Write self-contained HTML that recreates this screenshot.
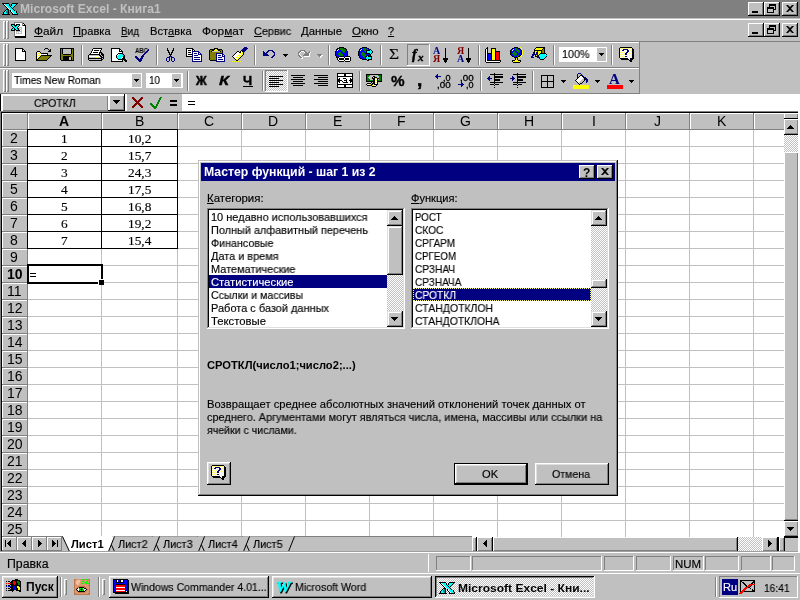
<!DOCTYPE html>
<html lang="ru"><head><meta charset="utf-8"><title>Microsoft Excel - Книга1</title>
<style>
html,body{margin:0;padding:0}
body{width:800px;height:600px;overflow:hidden;background:#c0c0c0;position:relative;font-family:"Liberation Sans",sans-serif;font-size:11px}
div,span.t,svg.ic{position:absolute}
span.t{white-space:pre;will-change:transform;-webkit-text-stroke:0.15px}
u{text-decoration:underline;text-underline-offset:1px;text-decoration-thickness:1px}
</style></head>
<body>
<div id="titlebar" style="left:0;top:0">
<div style="left:0px;top:0px;width:800px;height:18px;background:#808080;"></div>
<svg class="ic" style="left:2px;top:2px" width="16" height="13" viewBox="0 0 16 13" shape-rendering="crispEdges"><path fill="#000" d="M0 1h7v1h-7zM10 1h6v1h-6zM1 2h1v1h-1zM7 2h1v1h-1zM9 2h1v1h-1zM14 2h1v1h-1zM2 3h1v1h-1zM7 3h1v1h-1zM9 3h1v1h-1zM13 3h1v1h-1zM3 4h1v1h-1zM8 4h1v1h-1zM12 4h1v1h-1zM4 5h1v1h-1zM9 5h1v1h-1zM11 5h1v1h-1zM5 6h1v1h-1zM10 6h1v1h-1zM4 7h3v1h-3zM11 7h1v1h-1zM3 8h1v1h-1zM6 8h1v1h-1zM8 8h1v1h-1zM12 8h1v1h-1zM2 9h1v1h-1zM6 9h1v1h-1zM8 9h1v1h-1zM14 9h1v1h-1zM1 10h1v1h-1zM6 10h1v1h-1zM9 10h1v1h-1zM14 10h1v1h-1zM1 11h1v1h-1zM6 11h1v1h-1zM10 11h1v1h-1zM15 11h1v1h-1zM0 12h8v1h-8zM10 12h6v1h-6z"/><path fill="#fff" d="M2 2h1v1h-1zM3 3h1v1h-1zM4 4h1v1h-1zM5 5h1v1h-1zM6 6h1v1h-1zM7 7h1v1h-1zM9 8h1v1h-1zM9 9h1v1h-1zM10 10h1v1h-1zM11 11h1v1h-1z"/><path fill="#00ffff" d="M3 2h4v1h-4zM10 2h4v1h-4zM4 3h3v1h-3zM10 3h3v1h-3zM5 4h3v1h-3zM9 4h3v1h-3zM6 5h3v1h-3zM10 5h1v1h-1zM7 6h3v1h-3zM8 7h3v1h-3zM4 8h1v1h-1zM10 8h2v1h-2zM3 9h1v1h-1zM10 9h4v1h-4zM2 10h2v1h-2zM11 10h3v1h-3zM2 11h3v1h-3zM12 11h3v1h-3z"/><path fill="#008080" d="M5 8h1v1h-1zM4 9h2v1h-2zM4 10h2v1h-2zM5 11h1v1h-1z"/></svg>
<span class="t" style="left:20.2px;top:2px;font-family:'Liberation Sans',sans-serif;font-size:12px;line-height:14px;color:#c0c0c0;font-weight:bold;-webkit-text-stroke:0;transform:scaleX(1.007);transform-origin:0 0;">Microsoft Excel - Книга1</span>
<div style="left:748px;top:2px;width:16px;height:14px;background:#c0c0c0;box-shadow:inset -1px -1px #000,inset 1px 1px #fff,inset -2px -2px #808080;"></div>
<div style="left:752px;top:11px;width:6px;height:2px;background:#000;"></div>
<div style="left:764px;top:2px;width:16px;height:14px;background:#c0c0c0;box-shadow:inset -1px -1px #000,inset 1px 1px #fff,inset -2px -2px #808080;"></div>
<svg class="ic" style="left:767px;top:4px" width="10" height="10" viewBox="0 0 10 10" shape-rendering="crispEdges"><path d="M2.5 0.5h6v5h-6zM2 1.5h7M0.5 3.5h6v5h-6zM0 4.5h7" fill="none" stroke="#000"/><rect x="1" y="5" width="5" height="3" fill="#c0c0c0"/></svg>
<div style="left:782px;top:2px;width:16px;height:14px;background:#c0c0c0;box-shadow:inset -1px -1px #000,inset 1px 1px #fff,inset -2px -2px #808080;"></div>
<svg class="ic" style="left:786px;top:5px" width="8" height="7" viewBox="0 0 8 7" ><path d="M0 0h2l2 2 2-2h2l-3 3.5 3 3.5h-2l-2-2-2 2h-2l3-3.5z" fill="#000"/></svg>
</div>
<div id="menubar" style="left:0;top:0">
<div style="left:0px;top:19px;width:800px;height:1px;background:#fff;"></div>
<div style="left:0px;top:41px;width:800px;height:1px;background:#808080;"></div>
<div style="left:3px;top:21px;width:1px;height:18px;background:#fff;"></div>
<div style="left:5px;top:21px;width:1px;height:18px;background:#808080;"></div>
<div style="left:3px;top:21px;width:2px;height:1px;background:#fff;"></div>
<div style="left:4px;top:38px;width:2px;height:1px;background:#808080;"></div>
<div style="left:6px;top:21px;width:1px;height:18px;background:#fff;"></div>
<div style="left:8px;top:21px;width:1px;height:18px;background:#808080;"></div>
<div style="left:6px;top:21px;width:2px;height:1px;background:#fff;"></div>
<div style="left:7px;top:38px;width:2px;height:1px;background:#808080;"></div>
<svg class="ic" style="left:11px;top:22px" width="16" height="16" viewBox="0 0 16 16" shape-rendering="crispEdges"><path fill="#808080" d="M3 0h9v1h-9zM3 1h1v1h-1zM11 1h1v1h-1zM11 2h1v1h-1zM11 3h1v1h-1zM3 9h1v1h-1zM3 10h1v1h-1zM3 11h1v1h-1zM3 12h1v1h-1zM3 13h1v1h-1zM3 14h1v1h-1z"/><path fill="#fff" d="M4 1h7v1h-7zM4 2h1v1h-1zM9 2h2v1h-2zM12 2h1v1h-1zM9 3h2v1h-2zM8 4h6v1h-6zM7 5h1v1h-1zM11 5h3v1h-3zM9 6h1v1h-1zM11 6h3v1h-3zM11 7h3v1h-3zM9 8h1v1h-1zM11 8h3v1h-3zM4 9h1v1h-1zM11 9h3v1h-3zM4 10h1v1h-1zM6 10h1v1h-1zM8 10h2v1h-2zM11 10h3v1h-3zM4 11h1v1h-1zM11 11h3v1h-3zM4 12h10v1h-10zM4 13h10v1h-10z"/><path fill="#000" d="M12 1h1v1h-1zM0 2h4v1h-4zM5 2h4v1h-4zM13 2h1v1h-1zM0 3h1v1h-1zM3 3h3v1h-3zM8 3h1v1h-1zM12 3h3v1h-3zM1 4h1v1h-1zM4 4h1v1h-1zM7 4h1v1h-1zM14 4h1v1h-1zM2 5h1v1h-1zM6 5h1v1h-1zM14 5h1v1h-1zM1 6h1v1h-1zM3 6h1v1h-1zM6 6h2v1h-2zM14 6h1v1h-1zM0 7h1v1h-1zM3 7h2v1h-2zM7 7h1v1h-1zM14 7h1v1h-1zM0 8h4v1h-4zM5 8h4v1h-4zM14 8h1v1h-1zM14 9h1v1h-1zM14 10h1v1h-1zM14 11h1v1h-1zM14 12h1v1h-1zM14 13h1v1h-1zM4 14h11v1h-11zM4 15h11v1h-11z"/><path fill="#00ffff" d="M1 3h2v1h-2zM6 3h2v1h-2zM2 4h2v1h-2zM5 4h2v1h-2zM3 5h3v1h-3zM2 6h1v1h-1zM4 6h2v1h-2zM1 7h2v1h-2zM5 7h2v1h-2z"/><path fill="#c0c0c0" d="M8 5h3v1h-3zM8 6h1v1h-1zM10 6h1v1h-1zM8 7h3v1h-3zM10 8h1v1h-1zM5 9h6v1h-6zM5 10h1v1h-1zM7 10h1v1h-1zM10 10h1v1h-1zM5 11h6v1h-6z"/></svg>
<span class="t" style="left:33.7px;top:25px;font-family:'Liberation Sans',sans-serif;font-size:11px;line-height:13px;color:#000;transform:scaleX(1.075);transform-origin:0 0;"><u>Ф</u>айл</span>
<span class="t" style="left:72.7px;top:25px;font-family:'Liberation Sans',sans-serif;font-size:11px;line-height:13px;color:#000;transform:scaleX(1.012);transform-origin:0 0;"><u>П</u>равка</span>
<span class="t" style="left:120.7px;top:25px;font-family:'Liberation Sans',sans-serif;font-size:11px;line-height:13px;color:#000;transform:scaleX(0.909);transform-origin:0 0;"><u>В</u>ид</span>
<span class="t" style="left:150.2px;top:25px;font-family:'Liberation Sans',sans-serif;font-size:11px;line-height:13px;color:#000;transform:scaleX(1.017);transform-origin:0 0;">Вст<u>а</u>вка</span>
<span class="t" style="left:202.2px;top:25px;font-family:'Liberation Sans',sans-serif;font-size:11px;line-height:13px;color:#000;transform:scaleX(1.077);transform-origin:0 0;">Фор<u>м</u>ат</span>
<span class="t" style="left:253.7px;top:25px;font-family:'Liberation Sans',sans-serif;font-size:11px;line-height:13px;color:#000;transform:scaleX(0.984);transform-origin:0 0;"><u>С</u>ервис</span>
<span class="t" style="left:301.2px;top:25px;font-family:'Liberation Sans',sans-serif;font-size:11px;line-height:13px;color:#000;transform:scaleX(1.034);transform-origin:0 0;"><u>Д</u>анные</span>
<span class="t" style="left:351.7px;top:25px;font-family:'Liberation Sans',sans-serif;font-size:11px;line-height:13px;color:#000;transform:scaleX(1.040);transform-origin:0 0;"><u>О</u>кно</span>
<span class="t" style="left:387.7px;top:25px;font-family:'Liberation Sans',sans-serif;font-size:11px;line-height:13px;color:#000;"><u>?</u></span>
<div style="left:748px;top:23px;width:16px;height:14px;background:#c0c0c0;box-shadow:inset -1px -1px #000,inset 1px 1px #fff,inset -2px -2px #808080;"></div>
<div style="left:752px;top:32px;width:6px;height:2px;background:#000;"></div>
<div style="left:764px;top:23px;width:16px;height:14px;background:#c0c0c0;box-shadow:inset -1px -1px #000,inset 1px 1px #fff,inset -2px -2px #808080;"></div>
<svg class="ic" style="left:767px;top:25px" width="10" height="10" viewBox="0 0 10 10" shape-rendering="crispEdges"><path d="M2.5 0.5h6v5h-6zM2 1.5h7M0.5 3.5h6v5h-6zM0 4.5h7" fill="none" stroke="#000"/><rect x="1" y="5" width="5" height="3" fill="#c0c0c0"/></svg>
<div style="left:782px;top:23px;width:16px;height:14px;background:#c0c0c0;box-shadow:inset -1px -1px #000,inset 1px 1px #fff,inset -2px -2px #808080;"></div>
<svg class="ic" style="left:786px;top:26px" width="8" height="7" viewBox="0 0 8 7" ><path d="M0 0h2l2 2 2-2h2l-3 3.5 3 3.5h-2l-2-2-2 2h-2l3-3.5z" fill="#000"/></svg>
</div>
<div id="toolbar-standard" style="left:0;top:0">
<div style="left:0px;top:42px;width:640px;height:1px;background:#fff;"></div>
<div style="left:0px;top:67px;width:640px;height:1px;background:#808080;"></div>
<div style="left:639px;top:42px;width:1px;height:26px;background:#808080;"></div>
<div style="left:3px;top:44px;width:1px;height:22px;background:#fff;"></div>
<div style="left:5px;top:44px;width:1px;height:22px;background:#808080;"></div>
<div style="left:3px;top:44px;width:2px;height:1px;background:#fff;"></div>
<div style="left:4px;top:65px;width:2px;height:1px;background:#808080;"></div>
<div style="left:6px;top:44px;width:1px;height:22px;background:#fff;"></div>
<div style="left:8px;top:44px;width:1px;height:22px;background:#808080;"></div>
<div style="left:6px;top:44px;width:2px;height:1px;background:#fff;"></div>
<div style="left:7px;top:65px;width:2px;height:1px;background:#808080;"></div>
<svg class="ic" style="left:13px;top:47px" width="16" height="14" viewBox="0 0 16 14" shape-rendering="crispEdges"><path fill="#000" d="M2 1h8v1h-8zM2 2h1v1h-1zM9 2h2v1h-2zM2 3h1v1h-1zM9 3h1v1h-1zM11 3h1v1h-1zM2 4h1v1h-1zM9 4h4v1h-4zM2 5h1v1h-1zM12 5h1v1h-1zM2 6h1v1h-1zM12 6h1v1h-1zM2 7h1v1h-1zM12 7h1v1h-1zM2 8h1v1h-1zM12 8h1v1h-1zM2 9h1v1h-1zM12 9h1v1h-1zM2 10h1v1h-1zM12 10h1v1h-1zM2 11h1v1h-1zM12 11h1v1h-1zM2 12h1v1h-1zM12 12h1v1h-1zM2 13h11v1h-11z"/><path fill="#fff" d="M3 2h6v1h-6zM3 3h6v1h-6zM10 3h1v1h-1zM3 4h6v1h-6zM3 5h9v1h-9zM3 6h9v1h-9zM3 7h9v1h-9zM3 8h9v1h-9zM3 9h9v1h-9zM3 10h9v1h-9zM3 11h9v1h-9zM3 12h9v1h-9z"/></svg>
<svg class="ic" style="left:36px;top:47px" width="16" height="14" viewBox="0 0 16 14" shape-rendering="crispEdges"><path fill="#000" d="M9 1h3v1h-3zM8 2h1v1h-1zM12 2h1v1h-1zM14 2h1v1h-1zM13 3h2v1h-2zM1 4h3v1h-3zM12 4h3v1h-3zM0 5h1v1h-1zM4 5h1v1h-1zM0 6h1v1h-1zM5 6h7v1h-7zM0 7h1v1h-1zM11 7h1v1h-1zM0 8h1v1h-1zM5 8h11v1h-11zM0 9h1v1h-1zM4 9h1v1h-1zM14 9h1v1h-1zM0 10h1v1h-1zM3 10h1v1h-1zM13 10h1v1h-1zM0 11h1v1h-1zM2 11h1v1h-1zM12 11h1v1h-1zM0 12h2v1h-2zM11 12h1v1h-1zM0 13h11v1h-11z"/><path fill="#ffff00" d="M1 5h1v1h-1zM3 5h1v1h-1zM2 6h1v1h-1zM4 6h1v1h-1zM1 7h1v1h-1zM3 7h1v1h-1zM5 7h1v1h-1zM7 7h1v1h-1zM9 7h1v1h-1zM2 8h1v1h-1zM4 8h1v1h-1zM1 9h1v1h-1zM3 9h1v1h-1zM2 10h1v1h-1zM1 11h1v1h-1z"/><path fill="#fff" d="M2 5h1v1h-1zM1 6h1v1h-1zM3 6h1v1h-1zM2 7h1v1h-1zM4 7h1v1h-1zM6 7h1v1h-1zM8 7h1v1h-1zM10 7h1v1h-1zM1 8h1v1h-1zM3 8h1v1h-1zM2 9h1v1h-1zM1 10h1v1h-1z"/><path fill="#808000" d="M5 9h9v1h-9zM4 10h9v1h-9zM3 11h9v1h-9zM2 12h9v1h-9z"/></svg>
<svg class="ic" style="left:59px;top:47px" width="16" height="14" viewBox="0 0 16 14" shape-rendering="crispEdges"><path fill="#000" d="M1 1h14v1h-14zM1 2h1v1h-1zM3 2h1v1h-1zM12 2h1v1h-1zM14 2h1v1h-1zM1 3h1v1h-1zM3 3h1v1h-1zM12 3h1v1h-1zM14 3h1v1h-1zM1 4h1v1h-1zM3 4h1v1h-1zM12 4h1v1h-1zM14 4h1v1h-1zM1 5h1v1h-1zM3 5h1v1h-1zM12 5h1v1h-1zM14 5h1v1h-1zM1 6h1v1h-1zM3 6h1v1h-1zM12 6h1v1h-1zM14 6h1v1h-1zM1 7h1v1h-1zM4 7h8v1h-8zM14 7h1v1h-1zM1 8h1v1h-1zM14 8h1v1h-1zM1 9h1v1h-1zM4 9h8v1h-8zM14 9h1v1h-1zM1 10h1v1h-1zM4 10h6v1h-6zM12 10h1v1h-1zM14 10h1v1h-1zM1 11h1v1h-1zM4 11h6v1h-6zM12 11h1v1h-1zM14 11h1v1h-1zM1 12h1v1h-1zM4 12h6v1h-6zM12 12h1v1h-1zM14 12h1v1h-1zM2 13h13v1h-13z"/><path fill="#808000" d="M2 2h1v1h-1zM13 2h1v1h-1zM2 3h1v1h-1zM13 3h1v1h-1zM2 4h1v1h-1zM13 4h1v1h-1zM2 5h1v1h-1zM13 5h1v1h-1zM2 6h1v1h-1zM13 6h1v1h-1zM2 7h2v1h-2zM12 7h2v1h-2zM2 8h12v1h-12zM2 9h2v1h-2zM12 9h2v1h-2zM2 10h2v1h-2zM13 10h1v1h-1zM2 11h2v1h-2zM13 11h1v1h-1zM2 12h2v1h-2zM13 12h1v1h-1z"/><path fill="#c0c0c0" d="M4 2h8v1h-8zM4 3h8v1h-8zM4 4h8v1h-8zM4 5h8v1h-8zM4 6h8v1h-8zM10 10h2v1h-2zM10 11h2v1h-2zM10 12h2v1h-2z"/></svg>
<div style="left:81px;top:45px;width:1px;height:20px;background:#808080;"></div>
<div style="left:82px;top:45px;width:1px;height:20px;background:#fff;"></div>
<svg class="ic" style="left:88px;top:47px" width="16" height="14" viewBox="0 0 16 14" shape-rendering="crispEdges"><path fill="#000" d="M5 1h9v1h-9zM4 2h1v1h-1zM13 2h1v1h-1zM4 3h1v1h-1zM6 3h5v1h-5zM12 3h1v1h-1zM3 4h1v1h-1zM12 4h1v1h-1zM3 5h1v1h-1zM5 5h5v1h-5zM11 5h3v1h-3zM2 6h1v1h-1zM11 6h1v1h-1zM13 6h2v1h-2zM1 7h11v1h-11zM13 7h3v1h-3zM0 8h1v1h-1zM11 8h2v1h-2zM14 8h2v1h-2zM0 9h1v1h-1zM12 9h2v1h-2zM15 9h1v1h-1zM0 10h1v1h-1zM13 10h3v1h-3zM0 11h14v1h-14zM15 11h1v1h-1zM0 12h1v1h-1zM13 12h2v1h-2zM1 13h13v1h-13z"/><path fill="#fff" d="M5 2h8v1h-8zM5 3h1v1h-1zM11 3h1v1h-1zM4 4h8v1h-8zM4 5h1v1h-1zM10 5h1v1h-1zM3 6h8v1h-8zM1 9h11v1h-11z"/><path fill="#c0c0c0" d="M12 6h1v1h-1zM12 7h1v1h-1zM1 8h10v1h-10zM13 8h1v1h-1zM14 9h1v1h-1zM1 10h7v1h-7zM10 10h3v1h-3zM14 11h1v1h-1zM1 12h12v1h-12z"/><path fill="#ffff00" d="M8 10h2v1h-2z"/></svg>
<svg class="ic" style="left:111px;top:47px" width="16" height="15" viewBox="0 0 16 15" shape-rendering="crispEdges"><path fill="#000" d="M0 1h9v1h-9zM0 2h1v1h-1zM8 2h2v1h-2zM0 3h1v1h-1zM8 3h1v1h-1zM10 3h1v1h-1zM0 4h1v1h-1zM8 4h4v1h-4zM0 5h1v1h-1zM11 5h1v1h-1zM0 6h1v1h-1zM7 6h5v1h-5zM0 7h1v1h-1zM6 7h1v1h-1zM12 7h1v1h-1zM0 8h1v1h-1zM5 8h1v1h-1zM13 8h1v1h-1zM0 9h1v1h-1zM5 9h1v1h-1zM12 9h2v1h-2zM0 10h1v1h-1zM5 10h1v1h-1zM12 10h2v1h-2zM0 11h1v1h-1zM6 11h1v1h-1zM11 11h3v1h-3zM0 12h1v1h-1zM7 12h8v1h-8zM0 13h1v1h-1zM11 13h1v1h-1zM13 13h3v1h-3zM0 14h12v1h-12zM14 14h2v1h-2z"/><path fill="#fff" d="M1 2h7v1h-7zM1 3h7v1h-7zM9 3h1v1h-1zM1 4h7v1h-7zM1 5h10v1h-10zM1 6h6v1h-6zM1 7h5v1h-5zM7 7h1v1h-1zM1 8h4v1h-4zM6 8h1v1h-1zM1 9h4v1h-4zM1 10h4v1h-4zM11 10h1v1h-1zM1 11h5v1h-5zM10 11h1v1h-1zM1 12h6v1h-6zM1 13h10v1h-10z"/><path fill="#00ffff" d="M8 7h3v1h-3zM7 8h5v1h-5zM6 9h6v1h-6zM6 10h5v1h-5zM7 11h3v1h-3z"/><path fill="#808080" d="M11 7h1v1h-1zM12 8h1v1h-1z"/></svg>
<span class="t" style="left:135.2px;top:46px;font-family:'Liberation Sans',sans-serif;font-size:7px;line-height:9px;color:#000;font-weight:bold;-webkit-text-stroke:0;transform:scaleX(0.863);transform-origin:0 0;">ABC</span>
<svg class="ic" style="left:134px;top:49px" width="16" height="13" viewBox="0 0 16 13" shape-rendering="crispEdges"><path fill="#000080" d="M14 0h1v1h-1zM13 1h2v1h-2zM12 2h2v1h-2zM11 3h2v1h-2zM10 4h2v1h-2zM9 5h2v1h-2zM8 6h2v1h-2zM1 7h2v1h-2zM7 7h3v1h-3zM1 8h3v1h-3zM7 8h2v1h-2zM2 9h3v1h-3zM6 9h3v1h-3zM3 10h5v1h-5zM4 11h4v1h-4zM5 12h2v1h-2z"/></svg>
<div style="left:156px;top:45px;width:1px;height:20px;background:#808080;"></div>
<div style="left:157px;top:45px;width:1px;height:20px;background:#fff;"></div>
<svg class="ic" style="left:163px;top:47px" width="16" height="15" viewBox="0 0 16 15" shape-rendering="crispEdges"><path fill="#000" d="M4 1h1v1h-1zM10 1h1v1h-1zM4 2h1v1h-1zM10 2h1v1h-1zM4 3h2v1h-2zM9 3h2v1h-2zM5 4h1v1h-1zM9 4h1v1h-1zM5 5h2v1h-2zM8 5h2v1h-2zM6 6h1v1h-1zM8 6h1v1h-1zM6 7h3v1h-3zM7 8h1v1h-1z"/><path fill="#000080" d="M6 9h3v1h-3zM4 10h3v1h-3zM8 10h3v1h-3zM3 11h1v1h-1zM6 11h1v1h-1zM8 11h1v1h-1zM11 11h1v1h-1zM3 12h1v1h-1zM6 12h1v1h-1zM8 12h1v1h-1zM11 12h1v1h-1zM3 13h1v1h-1zM6 13h1v1h-1zM8 13h1v1h-1zM11 13h1v1h-1zM4 14h2v1h-2zM9 14h2v1h-2z"/></svg>
<svg class="ic" style="left:186px;top:47px" width="16" height="15" viewBox="0 0 16 15" shape-rendering="crispEdges"><path fill="#000" d="M0 1h7v1h-7zM0 2h1v1h-1zM6 2h2v1h-2zM0 3h1v1h-1zM2 3h3v1h-3zM6 3h1v1h-1zM8 3h1v1h-1zM0 4h1v1h-1zM0 5h1v1h-1zM2 5h3v1h-3zM0 6h1v1h-1zM0 7h1v1h-1zM2 7h4v1h-4zM0 8h1v1h-1zM0 9h6v1h-6z"/><path fill="#fff" d="M1 2h5v1h-5zM1 3h1v1h-1zM5 3h1v1h-1zM7 3h1v1h-1zM1 4h5v1h-5zM1 5h1v1h-1zM5 5h1v1h-1zM7 5h5v1h-5zM1 6h5v1h-5zM7 6h1v1h-1zM11 6h1v1h-1zM13 6h1v1h-1zM1 7h1v1h-1zM7 7h5v1h-5zM1 8h5v1h-5zM7 8h1v1h-1zM12 8h3v1h-3zM7 9h8v1h-8zM7 10h1v1h-1zM14 10h1v1h-1zM7 11h8v1h-8zM7 12h1v1h-1zM14 12h1v1h-1zM7 13h8v1h-8z"/><path fill="#000080" d="M6 4h7v1h-7zM6 5h1v1h-1zM12 5h2v1h-2zM6 6h1v1h-1zM8 6h3v1h-3zM12 6h1v1h-1zM14 6h1v1h-1zM6 7h1v1h-1zM12 7h4v1h-4zM6 8h1v1h-1zM8 8h4v1h-4zM15 8h1v1h-1zM6 9h1v1h-1zM15 9h1v1h-1zM6 10h1v1h-1zM8 10h6v1h-6zM15 10h1v1h-1zM6 11h1v1h-1zM15 11h1v1h-1zM6 12h1v1h-1zM8 12h6v1h-6zM15 12h1v1h-1zM6 13h1v1h-1zM15 13h1v1h-1zM6 14h10v1h-10z"/></svg>
<svg class="ic" style="left:209px;top:47px" width="16" height="15" viewBox="0 0 16 15" shape-rendering="crispEdges"><path fill="#000" d="M5 1h4v1h-4zM1 2h5v1h-5zM8 2h5v1h-5zM0 3h1v1h-1zM3 3h2v1h-2zM9 3h2v1h-2zM13 3h1v1h-1zM0 4h1v1h-1zM2 4h1v1h-1zM11 4h1v1h-1zM13 4h1v1h-1zM0 5h1v1h-1zM13 5h1v1h-1zM0 6h1v1h-1zM0 7h1v1h-1zM0 8h1v1h-1zM0 9h1v1h-1zM0 10h1v1h-1zM0 11h1v1h-1zM0 12h1v1h-1zM1 13h6v1h-6z"/><path fill="#ffff00" d="M6 2h2v1h-2zM5 3h4v1h-4z"/><path fill="#808000" d="M1 3h2v1h-2zM11 3h2v1h-2zM1 4h1v1h-1zM12 4h1v1h-1zM1 5h12v1h-12zM1 6h6v1h-6zM1 7h6v1h-6zM1 8h6v1h-6zM1 9h6v1h-6zM1 10h6v1h-6zM1 11h6v1h-6zM1 12h6v1h-6z"/><path fill="#c0c0c0" d="M3 4h8v1h-8z"/><path fill="#000080" d="M7 6h7v1h-7zM7 7h1v1h-1zM13 7h2v1h-2zM7 8h1v1h-1zM9 8h3v1h-3zM13 8h1v1h-1zM15 8h1v1h-1zM7 9h1v1h-1zM13 9h3v1h-3zM7 10h1v1h-1zM9 10h4v1h-4zM15 10h1v1h-1zM7 11h1v1h-1zM15 11h1v1h-1zM7 12h1v1h-1zM9 12h5v1h-5zM15 12h1v1h-1zM7 13h1v1h-1zM15 13h1v1h-1zM7 14h9v1h-9z"/><path fill="#fff" d="M8 7h5v1h-5zM8 8h1v1h-1zM12 8h1v1h-1zM14 8h1v1h-1zM8 9h5v1h-5zM8 10h1v1h-1zM13 10h2v1h-2zM8 11h7v1h-7zM8 12h1v1h-1zM14 12h1v1h-1zM8 13h7v1h-7z"/></svg>
<svg class="ic" style="left:232px;top:47px" width="16" height="15" viewBox="0 0 16 15" shape-rendering="crispEdges"><path fill="#000080" d="M12 0h3v1h-3zM11 1h5v1h-5zM10 2h5v1h-5zM10 3h4v1h-4zM11 4h2v1h-2z"/><path fill="#000" d="M9 3h1v1h-1zM5 4h2v1h-2zM8 4h1v1h-1zM10 4h1v1h-1zM4 5h1v1h-1zM7 5h2v1h-2zM11 5h1v1h-1zM3 6h1v1h-1zM11 6h1v1h-1zM2 7h1v1h-1zM11 7h1v1h-1zM1 8h1v1h-1zM10 8h1v1h-1zM0 9h1v1h-1zM9 9h1v1h-1zM1 10h1v1h-1zM8 10h1v1h-1zM2 11h1v1h-1zM7 11h1v1h-1zM3 12h1v1h-1zM6 12h1v1h-1zM4 13h2v1h-2z"/><path fill="#fff" d="M9 4h1v1h-1zM5 5h2v1h-2zM9 5h1v1h-1zM4 6h4v1h-4zM9 6h1v1h-1zM3 7h4v1h-4zM8 7h1v1h-1zM2 8h4v1h-4zM7 8h1v1h-1zM1 9h4v1h-4zM6 9h1v1h-1zM2 10h2v1h-2zM5 10h1v1h-1zM3 11h2v1h-2z"/><path fill="#ffff00" d="M10 5h1v1h-1zM8 6h1v1h-1zM10 6h1v1h-1zM7 7h1v1h-1zM9 7h2v1h-2zM6 8h1v1h-1zM8 8h2v1h-2zM5 9h1v1h-1zM7 9h2v1h-2zM4 10h1v1h-1zM6 10h2v1h-2zM5 11h2v1h-2zM4 12h2v1h-2zM0 14h1v1h-1zM2 14h1v1h-1zM4 14h1v1h-1zM6 14h1v1h-1zM8 14h1v1h-1z"/></svg>
<div style="left:254px;top:45px;width:1px;height:20px;background:#808080;"></div>
<div style="left:255px;top:45px;width:1px;height:20px;background:#fff;"></div>
<svg class="ic" style="left:262px;top:47px" width="16" height="11" viewBox="0 0 16 11" shape-rendering="crispEdges"><path fill="#000080" d="M6 3h5v1h-5zM1 4h1v1h-1zM5 4h2v1h-2zM10 4h2v1h-2zM1 5h2v1h-2zM4 5h2v1h-2zM11 5h2v1h-2zM1 6h4v1h-4zM12 6h1v1h-1zM1 7h5v1h-5zM12 7h1v1h-1zM1 8h6v1h-6zM11 8h2v1h-2zM10 9h2v1h-2zM9 10h2v1h-2z"/></svg>
<div style="left:283px;top:54px;width:5px;height:1px;background:#000;"></div>
<div style="left:284px;top:55px;width:3px;height:1px;background:#000;"></div>
<div style="left:285px;top:56px;width:1px;height:1px;background:#000;"></div>
<svg class="ic" style="left:295px;top:47px" width="16" height="12" viewBox="0 0 16 12" shape-rendering="crispEdges"><path fill="#808080" d="M5 3h5v1h-5zM4 4h2v1h-2zM9 4h2v1h-2zM14 4h1v1h-1zM3 5h2v1h-2zM10 5h2v1h-2zM13 5h2v1h-2zM3 6h1v1h-1zM10 6h4v1h-4zM3 7h1v1h-1zM9 7h5v1h-5zM3 8h2v1h-2zM8 8h6v1h-6zM4 9h2v1h-2zM5 10h2v1h-2z"/><path fill="#fff" d="M6 4h3v1h-3zM5 5h1v1h-1zM9 5h1v1h-1zM15 5h1v1h-1zM4 6h1v1h-1zM14 6h1v1h-1zM4 7h1v1h-1zM14 7h1v1h-1zM5 8h1v1h-1zM14 8h1v1h-1zM6 9h1v1h-1zM9 9h6v1h-6zM7 10h1v1h-1zM6 11h2v1h-2z"/></svg>
<div style="left:318px;top:55px;width:5px;height:1px;background:#fff;"></div>
<div style="left:319px;top:56px;width:3px;height:1px;background:#fff;"></div>
<div style="left:320px;top:57px;width:1px;height:1px;background:#fff;"></div>
<div style="left:317px;top:54px;width:5px;height:1px;background:#808080;"></div>
<div style="left:318px;top:55px;width:3px;height:1px;background:#808080;"></div>
<div style="left:319px;top:56px;width:1px;height:1px;background:#808080;"></div>
<div style="left:328px;top:45px;width:1px;height:20px;background:#808080;"></div>
<div style="left:329px;top:45px;width:1px;height:20px;background:#fff;"></div>
<svg class="ic" style="left:335px;top:47px" width="16" height="13" viewBox="0 0 16 13" shape-rendering="crispEdges"><path fill="#000" d="M4 0h5v1h-5zM2 1h2v1h-2zM9 1h2v1h-2zM1 2h1v1h-1zM11 2h1v1h-1zM1 3h1v1h-1zM11 3h1v1h-1zM0 4h1v1h-1zM12 4h1v1h-1zM0 5h1v1h-1zM12 5h1v1h-1zM0 6h1v1h-1zM12 6h1v1h-1zM0 7h1v1h-1zM12 7h1v1h-1zM0 8h1v1h-1zM12 8h1v1h-1zM1 9h1v1h-1zM11 9h1v1h-1zM1 10h1v1h-1zM11 10h1v1h-1zM2 11h2v1h-2zM9 11h2v1h-2zM4 12h5v1h-5z"/><path fill="#0000ff" d="M4 1h1v1h-1zM8 1h1v1h-1zM2 2h1v1h-1zM4 2h1v1h-1zM10 2h1v1h-1zM3 3h3v1h-3zM1 4h6v1h-6zM10 4h2v1h-2zM1 5h3v1h-3zM6 5h2v1h-2zM10 5h2v1h-2zM1 6h2v1h-2zM7 6h5v1h-5zM1 7h2v1h-2zM8 7h4v1h-4zM1 8h3v1h-3zM8 8h4v1h-4zM2 9h3v1h-3zM7 9h4v1h-4zM2 10h4v1h-4zM7 10h4v1h-4zM4 11h5v1h-5z"/><path fill="#008000" d="M5 1h3v1h-3zM5 2h5v1h-5zM6 3h5v1h-5zM7 4h3v1h-3zM4 5h2v1h-2zM8 5h2v1h-2zM3 6h4v1h-4zM3 7h5v1h-5zM4 8h4v1h-4zM5 9h2v1h-2zM6 10h1v1h-1z"/><path fill="#fff" d="M3 2h1v1h-1zM2 3h1v1h-1z"/></svg>
<svg class="ic" style="left:337px;top:56px" width="14" height="6" viewBox="0 0 14 6" shape-rendering="crispEdges"><path fill="#000" d="M2 0h5v1h-5zM8 0h5v1h-5zM1 1h1v1h-1zM7 1h1v1h-1zM13 1h1v1h-1zM0 2h1v1h-1zM2 2h5v1h-5zM8 2h4v1h-4zM13 2h1v1h-1zM0 3h1v1h-1zM2 3h5v1h-5zM8 3h4v1h-4zM13 3h1v1h-1zM1 4h1v1h-1zM7 4h1v1h-1zM13 4h1v1h-1zM2 5h5v1h-5zM8 5h5v1h-5z"/><path fill="#fff" d="M2 1h5v1h-5zM8 1h5v1h-5zM1 2h1v1h-1zM7 2h1v1h-1zM12 2h1v1h-1zM1 3h1v1h-1zM7 3h1v1h-1zM12 3h1v1h-1zM2 4h5v1h-5zM8 4h5v1h-5z"/></svg>
<svg class="ic" style="left:358px;top:47px" width="16" height="13" viewBox="0 0 16 13" shape-rendering="crispEdges"><path fill="#000" d="M4 0h5v1h-5zM2 1h2v1h-2zM9 1h2v1h-2zM1 2h1v1h-1zM11 2h1v1h-1zM1 3h1v1h-1zM11 3h1v1h-1zM0 4h1v1h-1zM12 4h1v1h-1zM0 5h1v1h-1zM12 5h1v1h-1zM0 6h1v1h-1zM12 6h1v1h-1zM0 7h1v1h-1zM12 7h1v1h-1zM0 8h1v1h-1zM12 8h1v1h-1zM1 9h1v1h-1zM11 9h1v1h-1zM1 10h1v1h-1zM11 10h1v1h-1zM2 11h2v1h-2zM9 11h2v1h-2zM4 12h5v1h-5z"/><path fill="#0000ff" d="M4 1h1v1h-1zM8 1h1v1h-1zM2 2h1v1h-1zM4 2h1v1h-1zM10 2h1v1h-1zM3 3h3v1h-3zM1 4h6v1h-6zM10 4h2v1h-2zM1 5h3v1h-3zM6 5h2v1h-2zM10 5h2v1h-2zM1 6h2v1h-2zM7 6h5v1h-5zM1 7h2v1h-2zM8 7h4v1h-4zM1 8h3v1h-3zM8 8h4v1h-4zM2 9h3v1h-3zM7 9h4v1h-4zM2 10h4v1h-4zM7 10h4v1h-4zM4 11h5v1h-5z"/><path fill="#008000" d="M5 1h3v1h-3zM5 2h5v1h-5zM6 3h5v1h-5zM7 4h3v1h-3zM4 5h2v1h-2zM8 5h2v1h-2zM3 6h4v1h-4zM3 7h5v1h-5zM4 8h4v1h-4zM5 9h2v1h-2zM6 10h1v1h-1z"/><path fill="#fff" d="M3 2h1v1h-1zM2 3h1v1h-1z"/></svg>
<svg class="ic" style="left:364px;top:49px" width="10" height="12" viewBox="0 0 10 12" shape-rendering="crispEdges"><path fill="#000" d="M5 0h2v1h-2zM2 1h4v1h-4zM7 1h1v1h-1zM2 2h1v1h-1zM8 2h1v1h-1zM2 3h1v1h-1zM8 3h1v1h-1zM2 4h4v1h-4zM7 4h1v1h-1zM5 5h2v1h-2zM3 6h2v1h-2zM2 7h1v1h-1zM4 7h4v1h-4zM1 8h1v1h-1zM7 8h1v1h-1zM1 9h1v1h-1zM7 9h1v1h-1zM2 10h1v1h-1zM4 10h4v1h-4zM3 11h2v1h-2z"/><path fill="#00ffff" d="M6 1h1v1h-1zM3 2h5v1h-5zM3 3h5v1h-5zM6 4h1v1h-1zM3 7h1v1h-1zM2 8h5v1h-5zM2 9h5v1h-5zM3 10h1v1h-1z"/></svg>
<div style="left:380px;top:45px;width:1px;height:20px;background:#808080;"></div>
<div style="left:381px;top:45px;width:1px;height:20px;background:#fff;"></div>
<span class="t" style="left:389.4px;top:47px;font-family:'Liberation Serif',serif;font-size:14px;line-height:16px;color:#000;transform:scaleX(1.238);transform-origin:0 0;">Σ</span>
<div style="left:407px;top:44px;width:23px;height:22px;box-shadow:inset -1px -1px #fff,inset 1px 1px #808080;"></div>
<span class="t" style="left:412.2px;top:47px;font-family:'Liberation Serif',serif;font-size:14px;line-height:16px;color:#000;font-weight:bold;-webkit-text-stroke:0;font-style:italic;-webkit-text-stroke:0.5px #000;">f</span>
<span class="t" style="left:418.2px;top:51px;font-family:'Liberation Serif',serif;font-size:11px;line-height:13px;color:#000;font-weight:bold;-webkit-text-stroke:0;font-style:italic;-webkit-text-stroke:0.4px #000;">x</span>
<span class="t" style="left:433.4px;top:45px;font-family:'Liberation Serif',serif;font-size:10px;line-height:12px;color:#000080;font-weight:bold;-webkit-text-stroke:0;">А</span>
<span class="t" style="left:433.4px;top:53px;font-family:'Liberation Serif',serif;font-size:10px;line-height:12px;color:#800000;font-weight:bold;-webkit-text-stroke:0;">Я</span>
<div style="left:445px;top:48px;width:1px;height:14px;background:#000;"></div>
<div style="left:443px;top:58px;width:5px;height:1px;background:#000;"></div>
<div style="left:443px;top:59px;width:5px;height:1px;background:#000;"></div>
<div style="left:444px;top:60px;width:3px;height:1px;background:#000;"></div>
<div style="left:444px;top:61px;width:3px;height:1px;background:#000;"></div>
<div style="left:445px;top:62px;width:1px;height:1px;background:#000;"></div>
<span class="t" style="left:457.4px;top:45px;font-family:'Liberation Serif',serif;font-size:10px;line-height:12px;color:#800000;font-weight:bold;-webkit-text-stroke:0;">Я</span>
<span class="t" style="left:457.4px;top:53px;font-family:'Liberation Serif',serif;font-size:10px;line-height:12px;color:#000080;font-weight:bold;-webkit-text-stroke:0;">А</span>
<div style="left:468px;top:48px;width:1px;height:14px;background:#000;"></div>
<div style="left:466px;top:58px;width:5px;height:1px;background:#000;"></div>
<div style="left:466px;top:59px;width:5px;height:1px;background:#000;"></div>
<div style="left:467px;top:60px;width:3px;height:1px;background:#000;"></div>
<div style="left:467px;top:61px;width:3px;height:1px;background:#000;"></div>
<div style="left:468px;top:62px;width:1px;height:1px;background:#000;"></div>
<div style="left:478px;top:45px;width:1px;height:20px;background:#808080;"></div>
<div style="left:479px;top:45px;width:1px;height:20px;background:#fff;"></div>
<svg class="ic" style="left:485px;top:47px" width="16" height="16" viewBox="0 0 16 16" shape-rendering="crispEdges"><path fill="#000" d="M2 0h1v1h-1zM1 1h2v1h-2zM6 1h5v1h-5zM0 2h1v1h-1zM2 2h1v1h-1zM6 2h1v1h-1zM10 2h1v1h-1zM0 3h1v1h-1zM2 3h1v1h-1zM6 3h1v1h-1zM10 3h1v1h-1zM0 4h1v1h-1zM2 4h1v1h-1zM6 4h1v1h-1zM10 4h5v1h-5zM0 5h1v1h-1zM2 5h1v1h-1zM6 5h1v1h-1zM10 5h1v1h-1zM14 5h1v1h-1zM0 6h1v1h-1zM2 6h5v1h-5zM10 6h1v1h-1zM14 6h1v1h-1zM0 7h1v1h-1zM2 7h1v1h-1zM6 7h1v1h-1zM10 7h1v1h-1zM14 7h1v1h-1zM0 8h1v1h-1zM2 8h1v1h-1zM6 8h1v1h-1zM10 8h1v1h-1zM14 8h1v1h-1zM0 9h1v1h-1zM2 9h1v1h-1zM6 9h1v1h-1zM10 9h1v1h-1zM14 9h1v1h-1zM0 10h1v1h-1zM2 10h1v1h-1zM6 10h1v1h-1zM10 10h1v1h-1zM14 10h1v1h-1zM0 11h1v1h-1zM2 11h1v1h-1zM6 11h1v1h-1zM10 11h1v1h-1zM14 11h1v1h-1zM0 12h1v1h-1zM2 12h1v1h-1zM6 12h1v1h-1zM10 12h1v1h-1zM14 12h1v1h-1zM0 13h1v1h-1zM2 13h14v1h-14zM0 14h1v1h-1zM15 14h1v1h-1zM1 15h14v1h-14z"/><path fill="#fff" d="M1 2h1v1h-1zM1 3h1v1h-1zM1 4h1v1h-1zM1 5h1v1h-1zM1 6h1v1h-1zM1 7h1v1h-1zM1 8h1v1h-1zM1 9h1v1h-1zM1 10h1v1h-1zM1 11h1v1h-1zM1 12h1v1h-1zM1 13h1v1h-1zM1 14h14v1h-14z"/><path fill="#ffff00" d="M7 2h3v1h-3zM7 3h3v1h-3zM7 4h3v1h-3zM7 5h3v1h-3zM7 6h3v1h-3zM7 7h3v1h-3zM7 8h3v1h-3zM7 9h3v1h-3zM7 10h3v1h-3zM7 11h3v1h-3zM7 12h3v1h-3z"/><path fill="#ff0000" d="M11 5h3v1h-3zM11 6h3v1h-3zM11 7h3v1h-3zM11 8h3v1h-3zM11 9h3v1h-3zM11 10h3v1h-3zM11 11h3v1h-3zM11 12h3v1h-3z"/><path fill="#0000ff" d="M3 7h3v1h-3zM3 8h3v1h-3zM3 9h3v1h-3zM3 10h3v1h-3zM3 11h3v1h-3zM3 12h3v1h-3z"/></svg>
<svg class="ic" style="left:508px;top:47px" width="16" height="16" viewBox="0 0 16 16" shape-rendering="crispEdges"><path fill="#000" d="M6 0h4v1h-4zM4 1h2v1h-2zM10 1h2v1h-2zM3 2h1v1h-1zM12 2h1v1h-1zM2 3h1v1h-1zM13 3h1v1h-1zM2 4h1v1h-1zM13 4h1v1h-1zM2 5h1v1h-1zM13 5h1v1h-1zM2 6h1v1h-1zM13 6h1v1h-1zM2 7h1v1h-1zM13 7h1v1h-1zM3 8h1v1h-1zM12 8h1v1h-1zM4 9h2v1h-2zM10 9h2v1h-2zM6 10h4v1h-4zM7 11h1v1h-1zM9 11h1v1h-1zM7 12h1v1h-1zM9 12h1v1h-1zM4 13h3v1h-3zM10 13h3v1h-3zM4 14h1v1h-1zM12 14h1v1h-1zM5 15h7v1h-7z"/><path fill="#ffff00" d="M12 0h1v1h-1zM13 1h1v1h-1zM13 2h1v1h-1zM14 3h1v1h-1zM14 4h1v1h-1zM14 5h1v1h-1zM14 6h1v1h-1zM14 7h1v1h-1zM13 8h1v1h-1zM12 9h2v1h-2zM10 10h2v1h-2zM8 11h1v1h-1zM8 12h1v1h-1zM7 13h3v1h-3zM5 14h7v1h-7z"/><path fill="#0000ff" d="M6 1h1v1h-1zM9 1h1v1h-1zM4 2h1v1h-1zM6 2h1v1h-1zM10 2h2v1h-2zM3 3h1v1h-1zM5 3h3v1h-3zM12 3h1v1h-1zM3 4h3v1h-3zM7 4h2v1h-2zM12 4h1v1h-1zM3 5h2v1h-2zM8 5h2v1h-2zM11 5h2v1h-2zM3 6h1v1h-1zM9 6h4v1h-4zM3 7h2v1h-2zM9 7h4v1h-4zM4 8h2v1h-2zM8 8h2v1h-2zM11 8h1v1h-1zM6 9h3v1h-3z"/><path fill="#008000" d="M7 1h2v1h-2zM7 2h3v1h-3zM8 3h4v1h-4zM6 4h1v1h-1zM9 4h3v1h-3zM5 5h3v1h-3zM10 5h1v1h-1zM4 6h5v1h-5zM5 7h4v1h-4zM6 8h2v1h-2zM10 8h1v1h-1zM9 9h1v1h-1z"/><path fill="#fff" d="M5 2h1v1h-1zM4 3h1v1h-1z"/></svg>
<svg class="ic" style="left:531px;top:47px" width="16" height="13" viewBox="0 0 16 13" shape-rendering="crispEdges"><path fill="#000" d="M5 0h9v1h-9zM4 1h1v1h-1zM12 1h2v1h-2zM3 2h1v1h-1zM11 2h1v1h-1zM13 2h1v1h-1zM3 3h8v1h-8zM13 3h1v1h-1zM3 4h1v1h-1zM10 4h1v1h-1zM13 4h1v1h-1zM3 5h1v1h-1zM10 5h1v1h-1zM13 5h1v1h-1zM9 6h6v1h-6zM8 7h1v1h-1zM15 7h1v1h-1zM4 8h1v1h-1zM7 8h1v1h-1zM4 9h2v1h-2zM7 9h1v1h-1zM15 9h1v1h-1zM8 10h1v1h-1zM14 10h1v1h-1zM8 11h1v1h-1zM13 11h1v1h-1zM9 12h4v1h-4z"/><path fill="#ffff00" d="M5 1h7v1h-7zM4 2h7v1h-7zM4 4h2v1h-2zM7 4h3v1h-3zM4 5h1v1h-1zM7 5h3v1h-3zM4 6h1v1h-1zM7 6h2v1h-2zM7 7h1v1h-1zM5 8h1v1h-1z"/><path fill="#808000" d="M12 2h1v1h-1zM11 3h2v1h-2zM11 4h2v1h-2zM11 5h2v1h-2z"/><path fill="#000080" d="M6 4h1v1h-1zM2 5h1v1h-1zM5 5h2v1h-2zM2 6h2v1h-2zM5 6h2v1h-2zM1 7h6v1h-6zM1 8h2v1h-2zM6 8h1v1h-1zM0 9h2v1h-2zM6 9h1v1h-1zM0 10h3v1h-3zM6 10h2v1h-2z"/><path fill="#00ffff" d="M9 7h5v1h-5zM8 8h8v1h-8zM8 9h7v1h-7zM9 10h5v1h-5zM9 11h4v1h-4z"/><path fill="#fff" d="M14 7h1v1h-1z"/></svg>
<div style="left:553px;top:45px;width:1px;height:20px;background:#808080;"></div>
<div style="left:554px;top:45px;width:1px;height:20px;background:#fff;"></div>
<div style="left:558px;top:46px;width:50px;height:17px;background:#fff;box-shadow:inset 0 0 0 1px #c0c0c0;"></div>
<div style="left:597px;top:48px;width:9px;height:13px;background:#c0c0c0;"></div>
<div style="left:599px;top:53px;width:5px;height:1px;background:#000;"></div>
<div style="left:600px;top:54px;width:3px;height:1px;background:#000;"></div>
<div style="left:601px;top:55px;width:1px;height:1px;background:#000;"></div>
<span class="t" style="left:562.2px;top:48px;font-family:'Liberation Sans',sans-serif;font-size:11px;line-height:13px;color:#000;transform:scaleX(0.981);transform-origin:0 0;">100%</span>
<div style="left:611px;top:45px;width:1px;height:20px;background:#808080;"></div>
<div style="left:612px;top:45px;width:1px;height:20px;background:#fff;"></div>
<svg class="ic" style="left:619px;top:47px" width="16" height="15" viewBox="0 0 16 15" shape-rendering="crispEdges"><path fill="#000" d="M1 0h12v1h-12zM0 1h1v1h-1zM13 1h1v1h-1zM0 2h1v1h-1zM13 2h2v1h-2zM0 3h1v1h-1zM13 3h2v1h-2zM0 4h1v1h-1zM13 4h2v1h-2zM0 5h1v1h-1zM13 5h2v1h-2zM0 6h1v1h-1zM13 6h2v1h-2zM0 7h1v1h-1zM13 7h2v1h-2zM0 8h1v1h-1zM13 8h2v1h-2zM0 9h1v1h-1zM13 9h2v1h-2zM0 10h1v1h-1zM13 10h2v1h-2zM1 11h8v1h-8zM11 11h4v1h-4zM2 12h8v1h-8zM11 12h3v1h-3zM10 13h3v1h-3zM11 14h2v1h-2z"/><path fill="#ffff70" d="M1 1h1v1h-1zM3 1h1v1h-1zM5 1h1v1h-1zM7 1h1v1h-1zM9 1h1v1h-1zM11 1h1v1h-1zM2 2h1v1h-1zM10 2h1v1h-1zM12 2h1v1h-1zM1 3h1v1h-1zM6 3h1v1h-1zM11 3h1v1h-1zM2 4h1v1h-1zM4 4h1v1h-1zM6 4h1v1h-1zM10 4h1v1h-1zM12 4h1v1h-1zM1 5h1v1h-1zM3 5h1v1h-1zM5 5h1v1h-1zM10 5h1v1h-1zM12 5h1v1h-1zM2 6h1v1h-1zM4 6h1v1h-1zM9 6h1v1h-1zM11 6h1v1h-1zM1 7h1v1h-1zM3 7h1v1h-1zM5 7h1v1h-1zM8 7h1v1h-1zM10 7h1v1h-1zM12 7h1v1h-1zM2 8h1v1h-1zM4 8h1v1h-1zM6 8h1v1h-1zM8 8h1v1h-1zM10 8h1v1h-1zM12 8h1v1h-1zM1 9h1v1h-1zM3 9h1v1h-1zM5 9h1v1h-1zM8 9h1v1h-1zM10 9h1v1h-1zM12 9h1v1h-1zM2 10h1v1h-1zM4 10h1v1h-1zM6 10h1v1h-1zM8 10h1v1h-1zM10 10h1v1h-1zM12 10h1v1h-1zM10 11h1v1h-1zM10 12h1v1h-1z"/><path fill="#fff" d="M2 1h1v1h-1zM4 1h1v1h-1zM6 1h1v1h-1zM8 1h1v1h-1zM10 1h1v1h-1zM12 1h1v1h-1zM1 2h1v1h-1zM3 2h1v1h-1zM9 2h1v1h-1zM11 2h1v1h-1zM2 3h1v1h-1zM5 3h1v1h-1zM7 3h1v1h-1zM10 3h1v1h-1zM12 3h1v1h-1zM1 4h1v1h-1zM3 4h1v1h-1zM5 4h1v1h-1zM7 4h1v1h-1zM11 4h1v1h-1zM2 5h1v1h-1zM4 5h1v1h-1zM6 5h1v1h-1zM9 5h1v1h-1zM11 5h1v1h-1zM1 6h1v1h-1zM3 6h1v1h-1zM5 6h1v1h-1zM8 6h1v1h-1zM10 6h1v1h-1zM12 6h1v1h-1zM2 7h1v1h-1zM4 7h1v1h-1zM9 7h1v1h-1zM11 7h1v1h-1zM1 8h1v1h-1zM3 8h1v1h-1zM5 8h1v1h-1zM7 8h1v1h-1zM9 8h1v1h-1zM11 8h1v1h-1zM2 9h1v1h-1zM4 9h1v1h-1zM9 9h1v1h-1zM11 9h1v1h-1zM1 10h1v1h-1zM3 10h1v1h-1zM5 10h1v1h-1zM7 10h1v1h-1zM9 10h1v1h-1zM11 10h1v1h-1zM9 11h1v1h-1z"/><path fill="#000080" d="M4 2h5v1h-5zM3 3h2v1h-2zM8 3h2v1h-2zM8 4h2v1h-2zM7 5h2v1h-2zM6 6h2v1h-2zM6 7h2v1h-2zM6 9h2v1h-2z"/></svg>
</div>
<div id="toolbar-formatting" style="left:0;top:0">
<div style="left:0px;top:68px;width:640px;height:1px;background:#fff;"></div>
<div style="left:0px;top:93px;width:640px;height:1px;background:#808080;"></div>
<div style="left:639px;top:68px;width:1px;height:26px;background:#808080;"></div>
<div style="left:3px;top:70px;width:1px;height:22px;background:#fff;"></div>
<div style="left:5px;top:70px;width:1px;height:22px;background:#808080;"></div>
<div style="left:3px;top:70px;width:2px;height:1px;background:#fff;"></div>
<div style="left:4px;top:91px;width:2px;height:1px;background:#808080;"></div>
<div style="left:6px;top:70px;width:1px;height:22px;background:#fff;"></div>
<div style="left:8px;top:70px;width:1px;height:22px;background:#808080;"></div>
<div style="left:6px;top:70px;width:2px;height:1px;background:#fff;"></div>
<div style="left:7px;top:91px;width:2px;height:1px;background:#808080;"></div>
<div style="left:11px;top:72px;width:132px;height:17px;background:#fff;box-shadow:inset 0 0 0 1px #c0c0c0;"></div>
<div style="left:132px;top:74px;width:9px;height:13px;background:#c0c0c0;"></div>
<div style="left:134px;top:79px;width:5px;height:1px;background:#000;"></div>
<div style="left:135px;top:80px;width:3px;height:1px;background:#000;"></div>
<div style="left:136px;top:81px;width:1px;height:1px;background:#000;"></div>
<span class="t" style="left:14.2px;top:74px;font-family:'Liberation Sans',sans-serif;font-size:11px;line-height:13px;color:#000;transform:scaleX(0.930);transform-origin:0 0;">Times New Roman</span>
<div style="left:145px;top:72px;width:39px;height:17px;background:#fff;box-shadow:inset 0 0 0 1px #c0c0c0;"></div>
<div style="left:172px;top:74px;width:9px;height:13px;background:#c0c0c0;"></div>
<div style="left:174px;top:79px;width:5px;height:1px;background:#000;"></div>
<div style="left:175px;top:80px;width:3px;height:1px;background:#000;"></div>
<div style="left:176px;top:81px;width:1px;height:1px;background:#000;"></div>
<span class="t" style="left:149.2px;top:74px;font-family:'Liberation Sans',sans-serif;font-size:11px;line-height:13px;color:#000;transform:scaleX(0.906);transform-origin:0 0;">10</span>
<div style="left:187px;top:71px;width:1px;height:20px;background:#808080;"></div>
<div style="left:188px;top:71px;width:1px;height:20px;background:#fff;"></div>
<span class="t" style="left:195.7px;top:74px;font-family:'Liberation Sans',sans-serif;font-size:12px;line-height:14px;color:#000;font-weight:bold;-webkit-text-stroke:0;-webkit-text-stroke:0.5px #000;transform:scaleX(0.976);transform-origin:0 0;">Ж</span>
<span class="t" style="left:218.9px;top:74px;font-family:'Liberation Sans',sans-serif;font-size:12px;line-height:14px;color:#000;font-weight:bold;-webkit-text-stroke:0;font-style:italic;-webkit-text-stroke:0.3px #000;transform:scaleX(1.367);transform-origin:0 0;">К</span>
<span class="t" style="left:242.9px;top:74px;font-family:'Liberation Sans',sans-serif;font-size:12px;line-height:14px;color:#000;font-weight:bold;-webkit-text-stroke:0;-webkit-text-stroke:0.4px #000;transform:scaleX(1.079);transform-origin:0 0;">Ч</span>
<div style="left:243px;top:86px;width:10px;height:1px;background:#000;"></div>
<div style="left:262px;top:71px;width:1px;height:20px;background:#808080;"></div>
<div style="left:263px;top:71px;width:1px;height:20px;background:#fff;"></div>
<div style="left:265px;top:70px;width:23px;height:22px;background:repeating-conic-gradient(#fff 0% 25%,#c0c0c0 0% 50%) 0 0/2px 2px;box-shadow:inset -1px -1px #fff,inset 1px 1px #808080;"></div>
<div style="left:269px;top:76px;width:14px;height:1px;background:#000;"></div>
<div style="left:269px;top:78px;width:10px;height:1px;background:#000;"></div>
<div style="left:269px;top:80px;width:14px;height:1px;background:#000;"></div>
<div style="left:269px;top:82px;width:10px;height:1px;background:#000;"></div>
<div style="left:269px;top:84px;width:14px;height:1px;background:#000;"></div>
<div style="left:269px;top:86px;width:10px;height:1px;background:#000;"></div>
<div style="left:291px;top:75px;width:14px;height:1px;background:#000;"></div>
<div style="left:293px;top:77px;width:10px;height:1px;background:#000;"></div>
<div style="left:291px;top:79px;width:14px;height:1px;background:#000;"></div>
<div style="left:293px;top:81px;width:10px;height:1px;background:#000;"></div>
<div style="left:291px;top:83px;width:14px;height:1px;background:#000;"></div>
<div style="left:293px;top:85px;width:10px;height:1px;background:#000;"></div>
<div style="left:314px;top:75px;width:14px;height:1px;background:#000;"></div>
<div style="left:318px;top:77px;width:10px;height:1px;background:#000;"></div>
<div style="left:314px;top:79px;width:14px;height:1px;background:#000;"></div>
<div style="left:318px;top:81px;width:10px;height:1px;background:#000;"></div>
<div style="left:314px;top:83px;width:14px;height:1px;background:#000;"></div>
<div style="left:318px;top:85px;width:10px;height:1px;background:#000;"></div>
<svg class="ic" style="left:337px;top:73px" width="16" height="15" viewBox="0 0 16 15" shape-rendering="crispEdges"><path fill="#000" d="M0 0h16v1h-16zM0 1h1v1h-1zM7 1h2v1h-2zM15 1h1v1h-1zM0 2h1v1h-1zM7 2h2v1h-2zM15 2h1v1h-1zM0 3h16v1h-16zM0 4h1v1h-1zM15 4h1v1h-1zM0 5h1v1h-1zM2 5h1v1h-1zM6 5h3v1h-3zM13 5h1v1h-1zM15 5h1v1h-1zM0 6h3v1h-3zM9 6h1v1h-1zM13 6h3v1h-3zM0 7h5v1h-5zM7 7h3v1h-3zM12 7h4v1h-4zM0 8h3v1h-3zM5 8h1v1h-1zM9 8h1v1h-1zM13 8h3v1h-3zM0 9h1v1h-1zM2 9h1v1h-1zM6 9h5v1h-5zM13 9h1v1h-1zM15 9h1v1h-1zM0 10h1v1h-1zM15 10h1v1h-1zM0 11h16v1h-16zM0 12h1v1h-1zM7 12h2v1h-2zM15 12h1v1h-1zM0 13h1v1h-1zM7 13h2v1h-2zM15 13h1v1h-1zM0 14h16v1h-16z"/><path fill="#fff" d="M1 1h6v1h-6zM9 1h6v1h-6zM1 2h6v1h-6zM9 2h6v1h-6zM1 4h14v1h-14zM1 5h1v1h-1zM3 5h3v1h-3zM9 5h4v1h-4zM14 5h1v1h-1zM3 6h6v1h-6zM10 6h3v1h-3zM5 7h2v1h-2zM10 7h2v1h-2zM3 8h2v1h-2zM6 8h3v1h-3zM10 8h3v1h-3zM1 9h1v1h-1zM3 9h3v1h-3zM11 9h2v1h-2zM14 9h1v1h-1zM1 10h14v1h-14zM1 12h6v1h-6zM9 12h6v1h-6zM1 13h6v1h-6zM9 13h6v1h-6z"/></svg>
<div style="left:359px;top:71px;width:1px;height:20px;background:#808080;"></div>
<div style="left:360px;top:71px;width:1px;height:20px;background:#fff;"></div>
<svg class="ic" style="left:366px;top:74px" width="16" height="13" viewBox="0 0 16 13" shape-rendering="crispEdges"><path fill="#000" d="M0 0h16v1h-16zM0 1h1v1h-1zM15 1h1v1h-1zM0 2h1v1h-1zM7 2h2v1h-2zM15 2h1v1h-1zM0 3h1v1h-1zM6 3h1v1h-1zM8 3h3v1h-3zM15 3h1v1h-1zM0 4h1v1h-1zM6 4h3v1h-3zM11 4h2v1h-2zM15 4h1v1h-1zM0 5h1v1h-1zM7 5h2v1h-2zM11 5h1v1h-1zM15 5h1v1h-1zM0 6h1v1h-1zM7 6h2v1h-2zM11 6h1v1h-1zM15 6h1v1h-1zM0 7h9v1h-9zM11 7h5v1h-5zM5 8h1v1h-1zM7 8h2v1h-2zM11 8h1v1h-1zM1 9h4v1h-4zM6 9h3v1h-3zM11 9h1v1h-1zM0 10h1v1h-1zM5 10h2v1h-2zM8 10h4v1h-4zM1 11h5v1h-5zM10 11h1v1h-1zM6 12h4v1h-4z"/><path fill="#008000" d="M1 1h3v1h-3zM12 1h3v1h-3zM1 2h2v1h-2zM13 2h2v1h-2zM1 3h1v1h-1zM13 3h2v1h-2zM1 4h2v1h-2zM13 4h2v1h-2zM1 5h3v1h-3zM13 5h2v1h-2zM1 6h6v1h-6zM12 6h3v1h-3z"/><path fill="#c0c0c0" d="M4 1h8v1h-8zM3 2h4v1h-4zM9 2h4v1h-4zM2 3h4v1h-4zM7 3h1v1h-1zM11 3h2v1h-2zM3 4h3v1h-3zM4 5h3v1h-3zM12 5h1v1h-1z"/><path fill="#ffff00" d="M9 4h2v1h-2zM9 6h2v1h-2zM9 8h2v1h-2zM1 10h1v1h-1zM4 10h1v1h-1zM6 11h1v1h-1zM9 11h1v1h-1z"/><path fill="#fff" d="M9 5h2v1h-2zM9 7h2v1h-2zM9 9h2v1h-2zM2 10h2v1h-2zM7 11h2v1h-2z"/></svg>
<span class="t" style="left:390.7px;top:73px;font-family:'Liberation Sans',sans-serif;font-size:14px;line-height:16px;color:#000;font-weight:bold;-webkit-text-stroke:0;-webkit-text-stroke:0.3px #000;transform:scaleX(1.092);transform-origin:0 0;">%</span>
<span class="t" style="left:416.9px;top:69px;font-family:'Liberation Sans',sans-serif;font-size:19px;line-height:21px;color:#000;font-weight:bold;-webkit-text-stroke:0;-webkit-text-stroke:0.6px #000;">,</span>
<svg class="ic" style="left:435px;top:74px" width="6" height="5" viewBox="0 0 6 5" shape-rendering="crispEdges"><path fill="#000080" d="M2 0h1v1h-1zM1 1h2v1h-2zM0 2h6v1h-6zM1 3h2v1h-2zM2 4h1v1h-1z"/></svg>
<span class="t" style="left:443.2px;top:73px;font-family:'Liberation Sans',sans-serif;font-size:9px;line-height:11px;color:#000;-webkit-text-stroke:0.3px #000;transform:scaleX(1.011);transform-origin:0 0;">,0</span>
<span class="t" style="left:437.2px;top:80px;font-family:'Liberation Sans',sans-serif;font-size:9px;line-height:11px;color:#000;-webkit-text-stroke:0.3px #000;transform:scaleX(1.087);transform-origin:0 0;">,00</span>
<span class="t" style="left:460.2px;top:73px;font-family:'Liberation Sans',sans-serif;font-size:9px;line-height:11px;color:#000;-webkit-text-stroke:0.3px #000;transform:scaleX(1.087);transform-origin:0 0;">,00</span>
<svg class="ic" style="left:458px;top:82px" width="6" height="5" viewBox="0 0 6 5" shape-rendering="crispEdges"><path fill="#000080" d="M3 0h1v1h-1zM3 1h2v1h-2zM0 2h6v1h-6zM3 3h2v1h-2zM3 4h1v1h-1z"/></svg>
<span class="t" style="left:466.2px;top:80px;font-family:'Liberation Sans',sans-serif;font-size:9px;line-height:11px;color:#000;-webkit-text-stroke:0.3px #000;transform:scaleX(1.011);transform-origin:0 0;">,0</span>
<div style="left:480px;top:71px;width:1px;height:20px;background:#808080;"></div>
<div style="left:481px;top:71px;width:1px;height:20px;background:#fff;"></div>
<svg class="ic" style="left:487px;top:73px" width="16" height="15" viewBox="0 0 16 15" shape-rendering="crispEdges"><path fill="#000" d="M7 0h1v1h-1zM3 1h13v1h-13zM7 2h1v1h-1zM7 3h9v1h-9zM7 4h9v1h-9zM7 5h1v1h-1zM7 6h6v1h-6zM7 7h6v1h-6zM7 8h1v1h-1zM3 9h13v1h-13zM7 10h1v1h-1zM3 11h4v1h-4zM8 11h4v1h-4zM7 12h1v1h-1zM7 14h1v1h-1z"/><path fill="#000080" d="M2 3h1v1h-1zM1 4h2v1h-2zM0 5h5v1h-5zM1 6h2v1h-2zM2 7h1v1h-1z"/></svg>
<svg class="ic" style="left:510px;top:73px" width="16" height="15" viewBox="0 0 16 15" shape-rendering="crispEdges"><path fill="#000" d="M7 0h1v1h-1zM3 1h13v1h-13zM7 2h1v1h-1zM7 3h9v1h-9zM7 4h9v1h-9zM7 5h1v1h-1zM7 6h6v1h-6zM7 7h6v1h-6zM7 8h1v1h-1zM3 9h13v1h-13zM7 10h1v1h-1zM3 11h4v1h-4zM8 11h4v1h-4zM7 12h1v1h-1zM7 14h1v1h-1z"/><path fill="#000080" d="M2 3h1v1h-1zM2 4h2v1h-2zM0 5h5v1h-5zM2 6h2v1h-2zM2 7h1v1h-1z"/></svg>
<div style="left:532px;top:71px;width:1px;height:20px;background:#808080;"></div>
<div style="left:533px;top:71px;width:1px;height:20px;background:#fff;"></div>
<svg class="ic" style="left:541px;top:75px" width="13" height="13" viewBox="0 0 13 13" shape-rendering="crispEdges"><path fill="#000" d="M0 0h13v1h-13zM0 1h1v1h-1zM6 1h1v1h-1zM12 1h1v1h-1zM0 2h1v1h-1zM6 2h1v1h-1zM12 2h1v1h-1zM0 3h1v1h-1zM6 3h1v1h-1zM12 3h1v1h-1zM0 4h1v1h-1zM6 4h1v1h-1zM12 4h1v1h-1zM0 5h1v1h-1zM6 5h1v1h-1zM12 5h1v1h-1zM0 6h13v1h-13zM0 7h1v1h-1zM6 7h1v1h-1zM12 7h1v1h-1zM0 8h1v1h-1zM6 8h1v1h-1zM12 8h1v1h-1zM0 9h1v1h-1zM6 9h1v1h-1zM12 9h1v1h-1zM0 10h1v1h-1zM6 10h1v1h-1zM12 10h1v1h-1zM0 11h1v1h-1zM6 11h1v1h-1zM12 11h1v1h-1zM0 12h13v1h-13z"/></svg>
<div style="left:561px;top:80px;width:5px;height:1px;background:#000;"></div>
<div style="left:562px;top:81px;width:3px;height:1px;background:#000;"></div>
<div style="left:563px;top:82px;width:1px;height:1px;background:#000;"></div>
<svg class="ic" style="left:573px;top:73px" width="16" height="16" viewBox="0 0 16 16" shape-rendering="crispEdges"><path fill="#000080" d="M5 0h3v1h-3zM4 1h1v1h-1zM8 1h1v1h-1zM4 2h1v1h-1zM9 2h1v1h-1zM4 3h1v1h-1zM10 3h1v1h-1zM4 4h1v1h-1zM11 4h2v1h-2zM12 5h2v1h-2zM13 6h2v1h-2zM13 7h2v1h-2zM13 8h2v1h-2zM13 9h1v1h-1z"/><path fill="#000" d="M7 2h2v1h-2zM6 3h1v1h-1zM9 3h1v1h-1zM5 4h1v1h-1zM10 4h1v1h-1zM4 5h1v1h-1zM11 5h1v1h-1zM3 6h1v1h-1zM11 6h2v1h-2zM2 7h1v1h-1zM11 7h1v1h-1zM3 8h1v1h-1zM10 8h1v1h-1zM4 9h1v1h-1zM9 9h1v1h-1zM5 10h1v1h-1zM7 10h2v1h-2zM6 11h1v1h-1z"/><path fill="#fff" d="M7 3h2v1h-2zM6 4h4v1h-4zM5 5h5v1h-5zM4 6h5v1h-5zM3 7h5v1h-5zM4 8h3v1h-3zM5 9h1v1h-1z"/><path fill="#c0c0c0" d="M10 5h1v1h-1zM9 6h2v1h-2zM8 7h3v1h-3zM7 8h3v1h-3zM6 9h3v1h-3zM6 10h1v1h-1z"/><path fill="#ffff00" d="M0 12h16v1h-16zM0 13h16v1h-16zM0 14h16v1h-16zM0 15h16v1h-16z"/></svg>
<div style="left:595px;top:80px;width:5px;height:1px;background:#000;"></div>
<div style="left:596px;top:81px;width:3px;height:1px;background:#000;"></div>
<div style="left:597px;top:82px;width:1px;height:1px;background:#000;"></div>
<span class="t" style="left:608.6px;top:71px;font-family:'Liberation Serif',serif;font-size:15px;line-height:17px;color:#000080;font-weight:bold;-webkit-text-stroke:0;">A</span>
<div style="left:607px;top:85px;width:16px;height:4px;background:#f00;"></div>
<div style="left:629px;top:80px;width:5px;height:1px;background:#000;"></div>
<div style="left:630px;top:81px;width:3px;height:1px;background:#000;"></div>
<div style="left:631px;top:82px;width:1px;height:1px;background:#000;"></div>
</div>
<div id="formulabar" style="left:0;top:0">
<div style="left:182px;top:94px;width:618px;height:17px;background:#fff;"></div>
<div style="left:0px;top:94px;width:1px;height:17px;background:#000;"></div>
<div style="left:1px;top:94px;width:107px;height:17px;background:#c0c0c0;box-shadow:inset 2px 2px #fff,inset -1px -1px #808080;"></div>
<div style="left:108px;top:94px;width:17px;height:17px;background:#c0c0c0;box-shadow:inset -1px -1px #000,inset 2px 2px #fff,inset -2px -2px #808080;"></div>
<div style="left:125px;top:94px;width:2px;height:17px;background:#fff;"></div>
<div style="left:113px;top:100px;width:7px;height:1px;background:#000;"></div>
<div style="left:114px;top:101px;width:5px;height:1px;background:#000;"></div>
<div style="left:115px;top:102px;width:3px;height:1px;background:#000;"></div>
<div style="left:116px;top:103px;width:1px;height:1px;background:#000;"></div>
<span class="t" style="left:33.7px;top:97px;font-family:'Liberation Sans',sans-serif;font-size:11px;line-height:13px;color:#000;transform:scaleX(0.946);transform-origin:0 0;">СРОТКЛ</span>
<svg class="ic" style="left:132px;top:97px" width="12" height="11" viewBox="0 0 12 11" shape-rendering="crispEdges"><path fill="#800000" d="M0 0h2v1h-2zM9 0h2v1h-2zM0 1h3v1h-3zM8 1h3v1h-3zM1 2h3v1h-3zM7 2h3v1h-3zM2 3h3v1h-3zM6 3h3v1h-3zM3 4h5v1h-5zM4 5h3v1h-3zM3 6h5v1h-5zM2 7h3v1h-3zM6 7h3v1h-3zM1 8h3v1h-3zM7 8h3v1h-3zM0 9h3v1h-3zM8 9h3v1h-3zM0 10h2v1h-2zM9 10h2v1h-2z"/></svg>
<svg class="ic" style="left:150px;top:97px" width="12" height="12" viewBox="0 0 12 12" shape-rendering="crispEdges"><path fill="#008000" d="M10 0h2v1h-2zM9 1h2v1h-2zM9 2h2v1h-2zM8 3h2v1h-2zM8 4h2v1h-2zM7 5h2v1h-2zM0 6h2v1h-2zM7 6h2v1h-2zM0 7h3v1h-3zM6 7h2v1h-2zM1 8h3v1h-3zM6 8h2v1h-2zM2 9h5v1h-5zM3 10h4v1h-4zM4 11h2v1h-2z"/></svg>
<div style="left:170px;top:100px;width:7px;height:2px;background:#000;"></div>
<div style="left:170px;top:104px;width:7px;height:2px;background:#000;"></div>
<div style="left:188px;top:101px;width:7px;height:1px;background:#000;"></div>
<div style="left:188px;top:104px;width:7px;height:1px;background:#000;"></div>
<div style="left:0px;top:111px;width:798px;height:1px;background:#808080;"></div>
<div style="left:0px;top:112px;width:798px;height:1px;background:#000;"></div>
<div style="left:0px;top:112px;width:1px;height:440px;background:#808080;"></div>
<div style="left:1px;top:112px;width:1px;height:440px;background:#000;"></div>
<div style="left:798px;top:111px;width:2px;height:442px;background:#fff;"></div>
</div>
<div id="sheet" style="left:0;top:0">
<div style="left:2px;top:113px;width:782px;height:424px;background:#fff;"></div>
<div style="left:101px;top:130px;width:1px;height:407px;background:#c0c0c0;"></div>
<div style="left:177px;top:130px;width:1px;height:407px;background:#c0c0c0;"></div>
<div style="left:241px;top:130px;width:1px;height:407px;background:#c0c0c0;"></div>
<div style="left:305px;top:130px;width:1px;height:407px;background:#c0c0c0;"></div>
<div style="left:369px;top:130px;width:1px;height:407px;background:#c0c0c0;"></div>
<div style="left:433px;top:130px;width:1px;height:407px;background:#c0c0c0;"></div>
<div style="left:497px;top:130px;width:1px;height:407px;background:#c0c0c0;"></div>
<div style="left:561px;top:130px;width:1px;height:407px;background:#c0c0c0;"></div>
<div style="left:625px;top:130px;width:1px;height:407px;background:#c0c0c0;"></div>
<div style="left:689px;top:130px;width:1px;height:407px;background:#c0c0c0;"></div>
<div style="left:753px;top:130px;width:1px;height:407px;background:#c0c0c0;"></div>
<div style="left:28px;top:146px;width:756px;height:1px;background:#c0c0c0;"></div>
<div style="left:28px;top:163px;width:756px;height:1px;background:#c0c0c0;"></div>
<div style="left:28px;top:180px;width:756px;height:1px;background:#c0c0c0;"></div>
<div style="left:28px;top:197px;width:756px;height:1px;background:#c0c0c0;"></div>
<div style="left:28px;top:214px;width:756px;height:1px;background:#c0c0c0;"></div>
<div style="left:28px;top:231px;width:756px;height:1px;background:#c0c0c0;"></div>
<div style="left:28px;top:248px;width:756px;height:1px;background:#c0c0c0;"></div>
<div style="left:28px;top:265px;width:756px;height:1px;background:#c0c0c0;"></div>
<div style="left:28px;top:282px;width:756px;height:1px;background:#c0c0c0;"></div>
<div style="left:28px;top:299px;width:756px;height:1px;background:#c0c0c0;"></div>
<div style="left:28px;top:316px;width:756px;height:1px;background:#c0c0c0;"></div>
<div style="left:28px;top:333px;width:756px;height:1px;background:#c0c0c0;"></div>
<div style="left:28px;top:350px;width:756px;height:1px;background:#c0c0c0;"></div>
<div style="left:28px;top:367px;width:756px;height:1px;background:#c0c0c0;"></div>
<div style="left:28px;top:384px;width:756px;height:1px;background:#c0c0c0;"></div>
<div style="left:28px;top:401px;width:756px;height:1px;background:#c0c0c0;"></div>
<div style="left:28px;top:418px;width:756px;height:1px;background:#c0c0c0;"></div>
<div style="left:28px;top:435px;width:756px;height:1px;background:#c0c0c0;"></div>
<div style="left:28px;top:452px;width:756px;height:1px;background:#c0c0c0;"></div>
<div style="left:28px;top:469px;width:756px;height:1px;background:#c0c0c0;"></div>
<div style="left:28px;top:486px;width:756px;height:1px;background:#c0c0c0;"></div>
<div style="left:28px;top:503px;width:756px;height:1px;background:#c0c0c0;"></div>
<div style="left:28px;top:520px;width:756px;height:1px;background:#c0c0c0;"></div>
<div style="left:28px;top:537px;width:756px;height:1px;background:#c0c0c0;"></div>
<div style="left:2px;top:113px;width:782px;height:16px;background:#c0c0c0;"></div>
<div style="left:2px;top:113px;width:782px;height:1px;background:#fff;"></div>
<div style="left:2px;top:129px;width:782px;height:1px;background:#808080;"></div>
<div style="left:2px;top:113px;width:1px;height:424px;background:#fff;"></div>
<div style="left:27px;top:113px;width:1px;height:17px;background:#808080;"></div>
<div style="left:28px;top:114px;width:1px;height:15px;background:#fff;"></div>
<div style="left:101px;top:113px;width:1px;height:17px;background:#808080;"></div>
<div style="left:102px;top:114px;width:1px;height:15px;background:#fff;"></div>
<div style="left:177px;top:113px;width:1px;height:17px;background:#808080;"></div>
<div style="left:178px;top:114px;width:1px;height:15px;background:#fff;"></div>
<div style="left:241px;top:113px;width:1px;height:17px;background:#808080;"></div>
<div style="left:242px;top:114px;width:1px;height:15px;background:#fff;"></div>
<div style="left:305px;top:113px;width:1px;height:17px;background:#808080;"></div>
<div style="left:306px;top:114px;width:1px;height:15px;background:#fff;"></div>
<div style="left:369px;top:113px;width:1px;height:17px;background:#808080;"></div>
<div style="left:370px;top:114px;width:1px;height:15px;background:#fff;"></div>
<div style="left:433px;top:113px;width:1px;height:17px;background:#808080;"></div>
<div style="left:434px;top:114px;width:1px;height:15px;background:#fff;"></div>
<div style="left:497px;top:113px;width:1px;height:17px;background:#808080;"></div>
<div style="left:498px;top:114px;width:1px;height:15px;background:#fff;"></div>
<div style="left:561px;top:113px;width:1px;height:17px;background:#808080;"></div>
<div style="left:562px;top:114px;width:1px;height:15px;background:#fff;"></div>
<div style="left:625px;top:113px;width:1px;height:17px;background:#808080;"></div>
<div style="left:626px;top:114px;width:1px;height:15px;background:#fff;"></div>
<div style="left:689px;top:113px;width:1px;height:17px;background:#808080;"></div>
<div style="left:690px;top:114px;width:1px;height:15px;background:#fff;"></div>
<div style="left:753px;top:113px;width:1px;height:17px;background:#808080;"></div>
<div style="left:754px;top:114px;width:1px;height:15px;background:#fff;"></div>
<span class="t" style="left:59.4px;top:113px;font-family:'Liberation Sans',sans-serif;font-size:14px;line-height:16px;color:#000;font-weight:bold;-webkit-text-stroke:0;-webkit-text-stroke:0;">A</span>
<span class="t" style="left:134.8px;top:113px;font-family:'Liberation Sans',sans-serif;font-size:14px;line-height:16px;color:#000;-webkit-text-stroke:0;">B</span>
<span class="t" style="left:204.4px;top:113px;font-family:'Liberation Sans',sans-serif;font-size:14px;line-height:16px;color:#000;-webkit-text-stroke:0;">C</span>
<span class="t" style="left:268.4px;top:113px;font-family:'Liberation Sans',sans-serif;font-size:14px;line-height:16px;color:#000;-webkit-text-stroke:0;">D</span>
<span class="t" style="left:332.8px;top:113px;font-family:'Liberation Sans',sans-serif;font-size:14px;line-height:16px;color:#000;-webkit-text-stroke:0;">E</span>
<span class="t" style="left:397.2px;top:113px;font-family:'Liberation Sans',sans-serif;font-size:14px;line-height:16px;color:#000;-webkit-text-stroke:0;">F</span>
<span class="t" style="left:460.1px;top:113px;font-family:'Liberation Sans',sans-serif;font-size:14px;line-height:16px;color:#000;-webkit-text-stroke:0;">G</span>
<span class="t" style="left:524.4px;top:113px;font-family:'Liberation Sans',sans-serif;font-size:14px;line-height:16px;color:#000;-webkit-text-stroke:0;">H</span>
<span class="t" style="left:591.6px;top:113px;font-family:'Liberation Sans',sans-serif;font-size:14px;line-height:16px;color:#000;-webkit-text-stroke:0;">I</span>
<span class="t" style="left:654.0px;top:113px;font-family:'Liberation Sans',sans-serif;font-size:14px;line-height:16px;color:#000;-webkit-text-stroke:0;">J</span>
<span class="t" style="left:716.8px;top:113px;font-family:'Liberation Sans',sans-serif;font-size:14px;line-height:16px;color:#000;-webkit-text-stroke:0;">K</span>
<div style="left:3px;top:130px;width:24px;height:407px;background:#c0c0c0;"></div>
<div style="left:27px;top:130px;width:1px;height:407px;background:#808080;"></div>
<div style="left:2px;top:130px;width:25px;height:1px;background:#fff;"></div>
<div style="left:2px;top:146px;width:26px;height:1px;background:#808080;"></div>
<span class="t" style="left:10.4px;top:130px;font-family:'Liberation Sans',sans-serif;font-size:14px;line-height:16px;color:#000;-webkit-text-stroke:0;">2</span>
<div style="left:2px;top:147px;width:25px;height:1px;background:#fff;"></div>
<div style="left:2px;top:163px;width:26px;height:1px;background:#808080;"></div>
<span class="t" style="left:10.4px;top:147px;font-family:'Liberation Sans',sans-serif;font-size:14px;line-height:16px;color:#000;-webkit-text-stroke:0;">3</span>
<div style="left:2px;top:164px;width:25px;height:1px;background:#fff;"></div>
<div style="left:2px;top:180px;width:26px;height:1px;background:#808080;"></div>
<span class="t" style="left:10.4px;top:164px;font-family:'Liberation Sans',sans-serif;font-size:14px;line-height:16px;color:#000;-webkit-text-stroke:0;">4</span>
<div style="left:2px;top:181px;width:25px;height:1px;background:#fff;"></div>
<div style="left:2px;top:197px;width:26px;height:1px;background:#808080;"></div>
<span class="t" style="left:10.4px;top:181px;font-family:'Liberation Sans',sans-serif;font-size:14px;line-height:16px;color:#000;-webkit-text-stroke:0;">5</span>
<div style="left:2px;top:198px;width:25px;height:1px;background:#fff;"></div>
<div style="left:2px;top:214px;width:26px;height:1px;background:#808080;"></div>
<span class="t" style="left:10.4px;top:198px;font-family:'Liberation Sans',sans-serif;font-size:14px;line-height:16px;color:#000;-webkit-text-stroke:0;">6</span>
<div style="left:2px;top:215px;width:25px;height:1px;background:#fff;"></div>
<div style="left:2px;top:231px;width:26px;height:1px;background:#808080;"></div>
<span class="t" style="left:10.4px;top:215px;font-family:'Liberation Sans',sans-serif;font-size:14px;line-height:16px;color:#000;-webkit-text-stroke:0;">7</span>
<div style="left:2px;top:232px;width:25px;height:1px;background:#fff;"></div>
<div style="left:2px;top:248px;width:26px;height:1px;background:#808080;"></div>
<span class="t" style="left:10.4px;top:232px;font-family:'Liberation Sans',sans-serif;font-size:14px;line-height:16px;color:#000;-webkit-text-stroke:0;">8</span>
<div style="left:2px;top:249px;width:25px;height:1px;background:#fff;"></div>
<div style="left:2px;top:265px;width:26px;height:1px;background:#808080;"></div>
<span class="t" style="left:10.4px;top:249px;font-family:'Liberation Sans',sans-serif;font-size:14px;line-height:16px;color:#000;-webkit-text-stroke:0;">9</span>
<div style="left:2px;top:266px;width:25px;height:1px;background:#fff;"></div>
<div style="left:2px;top:282px;width:26px;height:1px;background:#808080;"></div>
<span class="t" style="left:6.5px;top:266px;font-family:'Liberation Sans',sans-serif;font-size:14px;line-height:16px;color:#000;font-weight:bold;-webkit-text-stroke:0;-webkit-text-stroke:0;">10</span>
<div style="left:2px;top:283px;width:25px;height:1px;background:#fff;"></div>
<div style="left:2px;top:299px;width:26px;height:1px;background:#808080;"></div>
<span class="t" style="left:7.0px;top:283px;font-family:'Liberation Sans',sans-serif;font-size:14px;line-height:16px;color:#000;-webkit-text-stroke:0;">11</span>
<div style="left:2px;top:300px;width:25px;height:1px;background:#fff;"></div>
<div style="left:2px;top:316px;width:26px;height:1px;background:#808080;"></div>
<span class="t" style="left:6.5px;top:300px;font-family:'Liberation Sans',sans-serif;font-size:14px;line-height:16px;color:#000;-webkit-text-stroke:0;">12</span>
<div style="left:2px;top:317px;width:25px;height:1px;background:#fff;"></div>
<div style="left:2px;top:333px;width:26px;height:1px;background:#808080;"></div>
<span class="t" style="left:6.5px;top:317px;font-family:'Liberation Sans',sans-serif;font-size:14px;line-height:16px;color:#000;-webkit-text-stroke:0;">13</span>
<div style="left:2px;top:334px;width:25px;height:1px;background:#fff;"></div>
<div style="left:2px;top:350px;width:26px;height:1px;background:#808080;"></div>
<span class="t" style="left:6.5px;top:334px;font-family:'Liberation Sans',sans-serif;font-size:14px;line-height:16px;color:#000;-webkit-text-stroke:0;">14</span>
<div style="left:2px;top:351px;width:25px;height:1px;background:#fff;"></div>
<div style="left:2px;top:367px;width:26px;height:1px;background:#808080;"></div>
<span class="t" style="left:6.5px;top:351px;font-family:'Liberation Sans',sans-serif;font-size:14px;line-height:16px;color:#000;-webkit-text-stroke:0;">15</span>
<div style="left:2px;top:368px;width:25px;height:1px;background:#fff;"></div>
<div style="left:2px;top:384px;width:26px;height:1px;background:#808080;"></div>
<span class="t" style="left:6.5px;top:368px;font-family:'Liberation Sans',sans-serif;font-size:14px;line-height:16px;color:#000;-webkit-text-stroke:0;">16</span>
<div style="left:2px;top:385px;width:25px;height:1px;background:#fff;"></div>
<div style="left:2px;top:401px;width:26px;height:1px;background:#808080;"></div>
<span class="t" style="left:6.5px;top:385px;font-family:'Liberation Sans',sans-serif;font-size:14px;line-height:16px;color:#000;-webkit-text-stroke:0;">17</span>
<div style="left:2px;top:402px;width:25px;height:1px;background:#fff;"></div>
<div style="left:2px;top:418px;width:26px;height:1px;background:#808080;"></div>
<span class="t" style="left:6.5px;top:402px;font-family:'Liberation Sans',sans-serif;font-size:14px;line-height:16px;color:#000;-webkit-text-stroke:0;">18</span>
<div style="left:2px;top:419px;width:25px;height:1px;background:#fff;"></div>
<div style="left:2px;top:435px;width:26px;height:1px;background:#808080;"></div>
<span class="t" style="left:6.5px;top:419px;font-family:'Liberation Sans',sans-serif;font-size:14px;line-height:16px;color:#000;-webkit-text-stroke:0;">19</span>
<div style="left:2px;top:436px;width:25px;height:1px;background:#fff;"></div>
<div style="left:2px;top:452px;width:26px;height:1px;background:#808080;"></div>
<span class="t" style="left:6.5px;top:436px;font-family:'Liberation Sans',sans-serif;font-size:14px;line-height:16px;color:#000;-webkit-text-stroke:0;">20</span>
<div style="left:2px;top:453px;width:25px;height:1px;background:#fff;"></div>
<div style="left:2px;top:469px;width:26px;height:1px;background:#808080;"></div>
<span class="t" style="left:6.5px;top:453px;font-family:'Liberation Sans',sans-serif;font-size:14px;line-height:16px;color:#000;-webkit-text-stroke:0;">21</span>
<div style="left:2px;top:470px;width:25px;height:1px;background:#fff;"></div>
<div style="left:2px;top:486px;width:26px;height:1px;background:#808080;"></div>
<span class="t" style="left:6.5px;top:470px;font-family:'Liberation Sans',sans-serif;font-size:14px;line-height:16px;color:#000;-webkit-text-stroke:0;">22</span>
<div style="left:2px;top:487px;width:25px;height:1px;background:#fff;"></div>
<div style="left:2px;top:503px;width:26px;height:1px;background:#808080;"></div>
<span class="t" style="left:6.5px;top:487px;font-family:'Liberation Sans',sans-serif;font-size:14px;line-height:16px;color:#000;-webkit-text-stroke:0;">23</span>
<div style="left:2px;top:504px;width:25px;height:1px;background:#fff;"></div>
<div style="left:2px;top:520px;width:26px;height:1px;background:#808080;"></div>
<span class="t" style="left:6.5px;top:504px;font-family:'Liberation Sans',sans-serif;font-size:14px;line-height:16px;color:#000;-webkit-text-stroke:0;">24</span>
<div style="left:2px;top:521px;width:25px;height:1px;background:#fff;"></div>
<div style="left:2px;top:537px;width:26px;height:1px;background:#808080;"></div>
<span class="t" style="left:6.5px;top:521px;font-family:'Liberation Sans',sans-serif;font-size:14px;line-height:16px;color:#000;-webkit-text-stroke:0;">25</span>
<span class="t" style="left:61.2px;top:131px;font-family:'Liberation Serif',serif;font-size:13.33px;line-height:16px;color:#000;">1</span>
<span class="t" style="left:127.8px;top:131px;font-family:'Liberation Serif',serif;font-size:13.33px;line-height:16px;color:#000;">10,2</span>
<span class="t" style="left:61.2px;top:148px;font-family:'Liberation Serif',serif;font-size:13.33px;line-height:16px;color:#000;">2</span>
<span class="t" style="left:127.8px;top:148px;font-family:'Liberation Serif',serif;font-size:13.33px;line-height:16px;color:#000;">15,7</span>
<span class="t" style="left:61.2px;top:165px;font-family:'Liberation Serif',serif;font-size:13.33px;line-height:16px;color:#000;">3</span>
<span class="t" style="left:127.8px;top:165px;font-family:'Liberation Serif',serif;font-size:13.33px;line-height:16px;color:#000;">24,3</span>
<span class="t" style="left:61.2px;top:182px;font-family:'Liberation Serif',serif;font-size:13.33px;line-height:16px;color:#000;">4</span>
<span class="t" style="left:127.8px;top:182px;font-family:'Liberation Serif',serif;font-size:13.33px;line-height:16px;color:#000;">17,5</span>
<span class="t" style="left:61.2px;top:199px;font-family:'Liberation Serif',serif;font-size:13.33px;line-height:16px;color:#000;">5</span>
<span class="t" style="left:127.8px;top:199px;font-family:'Liberation Serif',serif;font-size:13.33px;line-height:16px;color:#000;">16,8</span>
<span class="t" style="left:61.2px;top:216px;font-family:'Liberation Serif',serif;font-size:13.33px;line-height:16px;color:#000;">6</span>
<span class="t" style="left:127.8px;top:216px;font-family:'Liberation Serif',serif;font-size:13.33px;line-height:16px;color:#000;">19,2</span>
<span class="t" style="left:61.2px;top:233px;font-family:'Liberation Serif',serif;font-size:13.33px;line-height:16px;color:#000;">7</span>
<span class="t" style="left:127.8px;top:233px;font-family:'Liberation Serif',serif;font-size:13.33px;line-height:16px;color:#000;">15,4</span>
<div style="left:27px;top:129px;width:151px;height:1px;background:#000;"></div>
<div style="left:27px;top:146px;width:151px;height:1px;background:#000;"></div>
<div style="left:27px;top:163px;width:151px;height:1px;background:#000;"></div>
<div style="left:27px;top:180px;width:151px;height:1px;background:#000;"></div>
<div style="left:27px;top:197px;width:151px;height:1px;background:#000;"></div>
<div style="left:27px;top:214px;width:151px;height:1px;background:#000;"></div>
<div style="left:27px;top:231px;width:151px;height:1px;background:#000;"></div>
<div style="left:27px;top:248px;width:151px;height:1px;background:#000;"></div>
<div style="left:27px;top:129px;width:1px;height:120px;background:#000;"></div>
<div style="left:101px;top:129px;width:1px;height:120px;background:#000;"></div>
<div style="left:177px;top:129px;width:1px;height:120px;background:#000;"></div>
<div style="left:27px;top:264px;width:76px;height:20px;box-sizing:border-box;border:2px solid #000;"></div>
<div style="left:98px;top:279px;width:6px;height:6px;background:#fff;"></div>
<div style="left:99px;top:280px;width:5px;height:5px;background:#000;"></div>
<div style="left:30px;top:273px;width:6px;height:1px;background:#000;"></div>
<div style="left:30px;top:276px;width:6px;height:1px;background:#000;"></div>
<div style="left:784px;top:113px;width:14px;height:424px;background:repeating-conic-gradient(#fff 0% 25%,#c0c0c0 0% 50%) 0 0/2px 2px;"></div>
<div style="left:784px;top:113px;width:14px;height:5px;background:#c0c0c0;box-shadow:inset 1px 1px #fff,inset -1px 0 #808080;"></div>
<div style="left:784px;top:118px;width:14px;height:1px;background:#000;"></div>
<div style="left:784px;top:119px;width:14px;height:16px;background:#c0c0c0;box-shadow:inset 0 -1px #000,inset 1px 1px #fff,inset -1px -2px #808080;"></div>
<div style="left:790px;top:125px;width:1px;height:1px;background:#000;"></div>
<div style="left:789px;top:126px;width:3px;height:1px;background:#000;"></div>
<div style="left:788px;top:127px;width:5px;height:1px;background:#000;"></div>
<div style="left:787px;top:128px;width:7px;height:1px;background:#000;"></div>
<div style="left:784px;top:152px;width:14px;height:369px;background:#c0c0c0;box-shadow:inset 0 -1px #000,inset 1px 1px #fff,inset -1px -2px #808080;"></div>
<div style="left:784px;top:521px;width:14px;height:16px;background:#c0c0c0;box-shadow:inset 0 -1px #000,inset 1px 1px #fff,inset -1px -2px #808080;"></div>
<div style="left:787px;top:527px;width:7px;height:1px;background:#000;"></div>
<div style="left:788px;top:528px;width:5px;height:1px;background:#000;"></div>
<div style="left:789px;top:529px;width:3px;height:1px;background:#000;"></div>
<div style="left:790px;top:530px;width:1px;height:1px;background:#000;"></div>
<div style="left:784px;top:537px;width:14px;height:15px;background:#c0c0c0;"></div>
<div style="left:784px;top:537px;width:14px;height:1px;background:#000;"></div>
<div style="left:784px;top:537px;width:1px;height:14px;background:#000;"></div>
</div>
<div id="sheet-tabs" style="left:0;top:0">
<div style="left:2px;top:537px;width:470px;height:15px;background:#c0c0c0;"></div>
<div style="left:2px;top:536px;width:470px;height:1px;background:#808080;"></div>
<div style="left:2px;top:537px;width:15px;height:14px;background:#c0c0c0;box-shadow:inset -1px -1px #808080,inset 1px 1px #fff;"></div>
<svg class="ic" style="left:5px;top:540px" width="6" height="7" viewBox="0 0 6 7" shape-rendering="crispEdges"><path fill="#000" d="M0 0h1v1h-1zM5 0h1v1h-1zM0 1h1v1h-1zM4 1h2v1h-2zM0 2h1v1h-1zM3 2h3v1h-3zM0 3h1v1h-1zM2 3h4v1h-4zM0 4h1v1h-1zM3 4h3v1h-3zM0 5h1v1h-1zM4 5h2v1h-2zM0 6h1v1h-1zM5 6h1v1h-1z"/></svg>
<div style="left:17px;top:537px;width:15px;height:14px;background:#c0c0c0;box-shadow:inset -1px -1px #808080,inset 1px 1px #fff;"></div>
<svg class="ic" style="left:22px;top:540px" width="4" height="7" viewBox="0 0 4 7" shape-rendering="crispEdges"><path fill="#000" d="M3 0h1v1h-1zM2 1h2v1h-2zM1 2h3v1h-3zM0 3h4v1h-4zM1 4h3v1h-3zM2 5h2v1h-2zM3 6h1v1h-1z"/></svg>
<div style="left:32px;top:537px;width:15px;height:14px;background:#c0c0c0;box-shadow:inset -1px -1px #808080,inset 1px 1px #fff;"></div>
<svg class="ic" style="left:38px;top:540px" width="4" height="7" viewBox="0 0 4 7" shape-rendering="crispEdges"><path fill="#000" d="M0 0h1v1h-1zM0 1h2v1h-2zM0 2h3v1h-3zM0 3h4v1h-4zM0 4h3v1h-3zM0 5h2v1h-2zM0 6h1v1h-1z"/></svg>
<div style="left:47px;top:537px;width:15px;height:14px;background:#c0c0c0;box-shadow:inset -1px -1px #808080,inset 1px 1px #fff;"></div>
<svg class="ic" style="left:52px;top:540px" width="6" height="7" viewBox="0 0 6 7" shape-rendering="crispEdges"><path fill="#000" d="M0 0h1v1h-1zM5 0h1v1h-1zM0 1h2v1h-2zM5 1h1v1h-1zM0 2h3v1h-3zM5 2h1v1h-1zM0 3h4v1h-4zM5 3h1v1h-1zM0 4h3v1h-3zM5 4h1v1h-1zM0 5h2v1h-2zM5 5h1v1h-1zM0 6h1v1h-1zM5 6h1v1h-1z"/></svg>
<svg class="ic" style="left:60px;top:536px" width="245" height="16" viewBox="0 0 245 16" ><path d="M182.5 0.5L189.5 15.5H228.5L234.5 0.5" fill="#c0c0c0" stroke="#000"/><path d="M137.5 0.5L144.5 15.5H183.5L189.5 0.5" fill="#c0c0c0" stroke="#000"/><path d="M92.5 0.5L99.5 15.5H138.5L144.5 0.5" fill="#c0c0c0" stroke="#000"/><path d="M47.5 0.5L54.5 15.5H93.5L99.5 0.5" fill="#c0c0c0" stroke="#000"/><path d="M2.5 0.5L9.5 15.5H48.5L54.5 0.5" fill="#fff" stroke="#000"/><rect x="3" y="0" width="49" height="1" fill="#fff"/></svg>
<span class="t" style="left:71.2px;top:538px;font-family:'Liberation Sans',sans-serif;font-size:11px;line-height:13px;color:#000;font-weight:bold;-webkit-text-stroke:0;transform:scaleX(1.015);transform-origin:0 0;">Лист1</span>
<span class="t" style="left:118.2px;top:538px;font-family:'Liberation Sans',sans-serif;font-size:11px;line-height:13px;color:#000;transform:scaleX(0.986);transform-origin:0 0;">Лист2</span>
<span class="t" style="left:163.2px;top:538px;font-family:'Liberation Sans',sans-serif;font-size:11px;line-height:13px;color:#000;transform:scaleX(0.986);transform-origin:0 0;">Лист3</span>
<span class="t" style="left:208.2px;top:538px;font-family:'Liberation Sans',sans-serif;font-size:11px;line-height:13px;color:#000;transform:scaleX(0.986);transform-origin:0 0;">Лист4</span>
<span class="t" style="left:253.2px;top:538px;font-family:'Liberation Sans',sans-serif;font-size:11px;line-height:13px;color:#000;transform:scaleX(0.986);transform-origin:0 0;">Лист5</span>
<div style="left:472px;top:537px;width:312px;height:14px;background:repeating-conic-gradient(#fff 0% 25%,#c0c0c0 0% 50%) 0 0/2px 2px;"></div>
<div style="left:472px;top:537px;width:4px;height:14px;background:#c0c0c0;box-shadow:inset 1px 1px #fff,inset -1px -1px #808080;"></div>
<div style="left:476px;top:537px;width:1px;height:14px;background:#000;"></div>
<div style="left:477px;top:537px;width:16px;height:14px;background:#c0c0c0;box-shadow:inset -1px 0 #000,inset 1px 1px #fff,inset -2px -1px #808080;"></div>
<div style="left:483px;top:543px;width:1px;height:1px;background:#000;"></div>
<div style="left:484px;top:542px;width:1px;height:3px;background:#000;"></div>
<div style="left:485px;top:541px;width:1px;height:5px;background:#000;"></div>
<div style="left:486px;top:540px;width:1px;height:7px;background:#000;"></div>
<div style="left:493px;top:537px;width:245px;height:14px;background:#c0c0c0;box-shadow:inset -1px 0 #000,inset 1px 1px #fff,inset -2px -1px #808080;"></div>
<div style="left:762px;top:537px;width:16px;height:14px;background:#c0c0c0;box-shadow:inset -1px 0 #000,inset 1px 1px #fff,inset -2px -1px #808080;"></div>
<div style="left:768px;top:540px;width:1px;height:7px;background:#000;"></div>
<div style="left:769px;top:541px;width:1px;height:5px;background:#000;"></div>
<div style="left:770px;top:542px;width:1px;height:3px;background:#000;"></div>
<div style="left:771px;top:543px;width:1px;height:1px;background:#000;"></div>
<div style="left:778px;top:537px;width:1px;height:14px;background:#000;"></div>
<div style="left:779px;top:537px;width:5px;height:14px;background:#c0c0c0;box-shadow:inset 1px 1px #fff,inset -1px -1px #808080;"></div>
<div style="left:0px;top:551px;width:798px;height:1px;background:#a0a0a0;"></div>
<div style="left:0px;top:552px;width:800px;height:1px;background:#fff;"></div>
</div>
<div id="statusbar" style="left:0;top:0">
<span class="t" style="left:7.2px;top:557px;font-family:'Liberation Sans',sans-serif;font-size:12px;line-height:14px;color:#000;transform:scaleX(1.026);transform-origin:0 0;">Правка</span>
<div style="left:428px;top:554px;width:1px;height:18px;background:#fff;"></div>
<div style="left:436px;top:556px;width:35px;height:15px;box-shadow:inset -1px -1px #fff,inset 1px 1px #808080;"></div>
<div style="left:472px;top:556px;width:130px;height:15px;box-shadow:inset -1px -1px #fff,inset 1px 1px #808080;"></div>
<div style="left:604px;top:556px;width:30px;height:15px;box-shadow:inset -1px -1px #fff,inset 1px 1px #808080;"></div>
<div style="left:636px;top:556px;width:35px;height:15px;box-shadow:inset -1px -1px #fff,inset 1px 1px #808080;"></div>
<div style="left:673px;top:556px;width:31px;height:15px;box-shadow:inset -1px -1px #fff,inset 1px 1px #808080;"></div>
<div style="left:705px;top:556px;width:34px;height:15px;box-shadow:inset -1px -1px #fff,inset 1px 1px #808080;"></div>
<div style="left:741px;top:556px;width:30px;height:15px;box-shadow:inset -1px -1px #fff,inset 1px 1px #808080;"></div>
<div style="left:772px;top:556px;width:23px;height:15px;box-shadow:inset -1px -1px #fff,inset 1px 1px #808080;"></div>
<span class="t" style="left:675.2px;top:558px;font-family:'Liberation Sans',sans-serif;font-size:11px;line-height:13px;color:#000;transform:scaleX(1.041);transform-origin:0 0;">NUM</span>
</div>
<div id="taskbar" style="left:0;top:0">
<div style="left:0px;top:573px;width:800px;height:1px;background:#fff;"></div>
<div style="left:2px;top:576px;width:56px;height:22px;background:#c0c0c0;box-shadow:inset -1px -1px #000,inset 1px 1px #fff,inset -2px -2px #808080,inset 2px 2px #dfdfdf;"></div>
<svg class="ic" style="left:6px;top:579px" width="16" height="13" viewBox="0 0 16 13" shape-rendering="crispEdges"><path fill="#000" d="M9 0h3v1h-3zM6 1h8v1h-8zM0 2h1v1h-1zM2 2h2v1h-2zM5 2h2v1h-2zM9 2h2v1h-2zM13 2h2v1h-2zM4 3h3v1h-3zM10 3h1v1h-1zM14 3h1v1h-1zM5 4h2v1h-2zM10 4h2v1h-2zM14 4h1v1h-1zM4 5h4v1h-4zM9 5h3v1h-3zM14 5h1v1h-1zM0 6h1v1h-1zM2 6h2v1h-2zM5 6h10v1h-10zM5 7h2v1h-2zM9 7h2v1h-2zM13 7h2v1h-2zM4 8h3v1h-3zM10 8h1v1h-1zM14 8h1v1h-1zM0 9h1v1h-1zM2 9h2v1h-2zM5 9h2v1h-2zM10 9h2v1h-2zM14 9h1v1h-1zM4 10h4v1h-4zM9 10h3v1h-3zM14 10h1v1h-1zM0 11h1v1h-1zM2 11h6v1h-6zM10 11h5v1h-5zM6 12h1v1h-1zM13 12h2v1h-2z"/><path fill="#ff0000" d="M7 2h2v1h-2zM7 3h3v1h-3zM0 4h1v1h-1zM2 4h3v1h-3zM7 4h3v1h-3zM8 5h1v1h-1z"/><path fill="#008000" d="M11 2h2v1h-2zM11 3h3v1h-3zM12 4h2v1h-2zM12 5h2v1h-2z"/><path fill="#0000ff" d="M0 7h1v1h-1zM2 7h3v1h-3zM7 7h2v1h-2zM7 8h3v1h-3zM7 9h3v1h-3zM8 10h1v1h-1z"/><path fill="#ffff00" d="M11 7h2v1h-2zM11 8h3v1h-3zM12 9h2v1h-2zM12 10h2v1h-2z"/></svg>
<span class="t" style="left:25.7px;top:580px;font-family:'Liberation Sans',sans-serif;font-size:12px;line-height:14px;color:#000;font-weight:bold;-webkit-text-stroke:0;transform:scaleX(0.997);transform-origin:0 0;">Пуск</span>
<div style="left:60px;top:577px;width:1px;height:20px;background:#808080;"></div>
<div style="left:61px;top:577px;width:1px;height:20px;background:#fff;"></div>
<div style="left:64px;top:579px;width:3px;height:16px;box-shadow:inset 1px 1px #fff,inset -1px -1px #808080;"></div>
<svg class="ic" style="left:74px;top:579px" width="16" height="16" viewBox="0 0 16 16" shape-rendering="crispEdges"><path fill="#c07850" d="M0 0h2v1h-2zM10 0h1v1h-1zM14 0h2v1h-2zM0 1h1v1h-1zM15 1h1v1h-1zM0 2h1v1h-1zM15 2h1v1h-1zM0 3h1v1h-1zM15 3h1v1h-1zM0 4h1v1h-1zM15 4h1v1h-1zM0 5h1v1h-1zM15 5h1v1h-1zM0 6h1v1h-1zM14 6h2v1h-2zM0 7h1v1h-1zM4 7h7v1h-7zM15 7h1v1h-1zM0 8h1v1h-1zM3 8h2v1h-2zM10 8h2v1h-2zM15 8h1v1h-1zM0 9h1v1h-1zM2 9h1v1h-1zM12 9h1v1h-1zM15 9h1v1h-1zM0 10h1v1h-1zM13 10h1v1h-1zM15 10h1v1h-1zM0 11h1v1h-1zM2 11h1v1h-1zM12 11h1v1h-1zM15 11h1v1h-1zM0 12h1v1h-1zM3 12h1v1h-1zM11 12h1v1h-1zM15 12h1v1h-1zM0 13h1v1h-1zM4 13h7v1h-7zM15 13h1v1h-1zM0 14h2v1h-2zM14 14h2v1h-2zM0 15h16v1h-16z"/><path fill="#e09870" d="M2 0h5v1h-5zM1 1h2v1h-2zM6 1h3v1h-3zM10 1h3v1h-3zM14 1h1v1h-1zM1 2h1v1h-1zM6 2h2v1h-2zM10 2h2v1h-2zM14 2h1v1h-1zM1 3h1v1h-1zM6 3h4v1h-4zM11 3h1v1h-1zM13 3h2v1h-2zM1 4h1v1h-1zM5 4h2v1h-2zM10 4h1v1h-1zM1 5h2v1h-2zM5 5h10v1h-10zM1 6h13v1h-13zM1 7h3v1h-3zM11 7h4v1h-4zM1 8h2v1h-2zM12 8h3v1h-3zM1 9h1v1h-1zM13 9h2v1h-2zM1 10h1v1h-1zM14 10h1v1h-1zM1 11h1v1h-1zM13 11h2v1h-2zM1 12h2v1h-2zM12 12h3v1h-3zM1 13h3v1h-3zM11 13h4v1h-4zM2 14h12v1h-12z"/><path fill="#00ff00" d="M7 0h3v1h-3zM11 0h3v1h-3zM9 1h1v1h-1zM13 1h1v1h-1zM8 2h2v1h-2zM12 2h2v1h-2zM10 3h1v1h-1zM12 3h1v1h-1zM7 4h3v1h-3zM11 4h4v1h-4zM6 9h1v1h-1zM8 9h1v1h-1zM5 10h1v1h-1zM9 10h1v1h-1zM6 11h1v1h-1zM8 11h1v1h-1z"/><path fill="#f0c0a0" d="M3 1h3v1h-3zM2 2h4v1h-4zM2 3h4v1h-4zM2 4h3v1h-3zM3 5h2v1h-2z"/><path fill="#000" d="M5 8h5v1h-5zM3 9h1v1h-1zM10 9h2v1h-2zM2 10h1v1h-1zM7 10h1v1h-1zM12 10h1v1h-1zM3 11h1v1h-1zM11 11h1v1h-1zM4 12h7v1h-7z"/><path fill="#fff" d="M4 9h1v1h-1zM9 9h1v1h-1zM3 10h2v1h-2zM10 10h2v1h-2zM4 11h1v1h-1zM10 11h1v1h-1z"/><path fill="#008000" d="M5 9h1v1h-1zM7 9h1v1h-1zM6 10h1v1h-1zM8 10h1v1h-1zM5 11h1v1h-1zM7 11h1v1h-1zM9 11h1v1h-1z"/></svg>
<div style="left:98px;top:577px;width:1px;height:20px;background:#808080;"></div>
<div style="left:99px;top:577px;width:1px;height:20px;background:#fff;"></div>
<div style="left:102px;top:579px;width:3px;height:16px;box-shadow:inset 1px 1px #fff,inset -1px -1px #808080;"></div>
<div style="left:109px;top:576px;width:160px;height:22px;background:#c0c0c0;box-shadow:inset -1px -1px #000,inset 1px 1px #fff,inset -2px -2px #808080,inset 2px 2px #dfdfdf;"></div>
<svg class="ic" style="left:113px;top:579px" width="16" height="15" viewBox="0 0 16 15" shape-rendering="crispEdges"><path fill="#000" d="M0 0h15v1h-15zM0 1h1v1h-1zM3 1h1v1h-1zM7 1h1v1h-1zM10 1h1v1h-1zM14 1h2v1h-2zM0 2h1v1h-1zM3 2h1v1h-1zM7 2h1v1h-1zM10 2h1v1h-1zM14 2h2v1h-2zM0 3h1v1h-1zM3 3h8v1h-8zM14 3h2v1h-2zM0 4h1v1h-1zM14 4h2v1h-2zM0 5h1v1h-1zM3 5h9v1h-9zM14 5h2v1h-2zM0 6h1v1h-1zM14 6h2v1h-2zM0 7h1v1h-1zM14 7h2v1h-2zM0 8h1v1h-1zM14 8h2v1h-2zM0 9h1v1h-1zM14 9h2v1h-2zM0 10h1v1h-1zM14 10h2v1h-2zM0 11h1v1h-1zM14 11h2v1h-2zM0 12h1v1h-1zM14 12h2v1h-2zM0 13h16v1h-16zM2 14h14v1h-14z"/><path fill="#0000ff" d="M1 1h2v1h-2zM5 1h2v1h-2zM11 1h3v1h-3zM1 2h2v1h-2zM5 2h2v1h-2zM11 2h3v1h-3zM1 3h2v1h-2zM11 3h3v1h-3zM1 4h13v1h-13zM1 5h2v1h-2zM12 5h2v1h-2zM1 6h2v1h-2zM12 6h2v1h-2zM1 7h2v1h-2zM12 7h2v1h-2zM1 8h2v1h-2zM12 8h2v1h-2zM1 9h2v1h-2zM12 9h2v1h-2zM1 10h2v1h-2zM12 10h2v1h-2zM1 11h2v1h-2zM12 11h2v1h-2zM1 12h2v1h-2zM12 12h1v1h-1z"/><path fill="#fff" d="M4 1h1v1h-1zM8 1h2v1h-2zM4 2h1v1h-1zM8 2h2v1h-2zM3 8h9v1h-9zM3 11h9v1h-9zM13 12h1v1h-1z"/><path fill="#ff0000" d="M3 6h9v1h-9zM3 7h9v1h-9zM3 9h9v1h-9zM3 10h9v1h-9zM3 12h9v1h-9z"/></svg>
<span class="t" style="left:131.2px;top:581px;font-family:'Liberation Sans',sans-serif;font-size:11px;line-height:13px;color:#000;transform:scaleX(0.956);transform-origin:0 0;">Windows Commander 4.01...</span>
<div style="left:272px;top:576px;width:160px;height:22px;background:#c0c0c0;box-shadow:inset -1px -1px #000,inset 1px 1px #fff,inset -2px -2px #808080,inset 2px 2px #dfdfdf;"></div>
<span class="t" style="left:277.2px;top:580px;font-family:'Liberation Serif',serif;font-size:15px;line-height:17px;color:#000;font-weight:bold;-webkit-text-stroke:0;font-style:italic;-webkit-text-stroke:0.8px #000;transform:scaleX(1.094);transform-origin:0 0;">W</span>
<span class="t" style="left:276.2px;top:579px;font-family:'Liberation Serif',serif;font-size:15px;line-height:17px;color:#00ffff;font-weight:bold;-webkit-text-stroke:0;font-style:italic;-webkit-text-stroke:0.5px #00ffff;transform:scaleX(1.094);transform-origin:0 0;">W</span>
<span class="t" style="left:295.2px;top:581px;font-family:'Liberation Sans',sans-serif;font-size:11px;line-height:13px;color:#000;transform:scaleX(0.964);transform-origin:0 0;">Microsoft Word</span>
<div style="left:435px;top:576px;width:160px;height:22px;background:repeating-conic-gradient(#fff 0% 25%,#c0c0c0 0% 50%) 0 0/2px 2px;box-shadow:inset -1px -1px #fff,inset 1px 1px #000,inset -2px -2px #dfdfdf,inset 2px 2px #808080;"></div>
<svg class="ic" style="left:439px;top:581px" width="16" height="13" viewBox="0 0 16 13" shape-rendering="crispEdges"><path fill="#000" d="M0 1h7v1h-7zM10 1h6v1h-6zM1 2h1v1h-1zM7 2h1v1h-1zM9 2h1v1h-1zM14 2h1v1h-1zM2 3h1v1h-1zM7 3h1v1h-1zM9 3h1v1h-1zM13 3h1v1h-1zM3 4h1v1h-1zM8 4h1v1h-1zM12 4h1v1h-1zM4 5h1v1h-1zM9 5h1v1h-1zM11 5h1v1h-1zM5 6h1v1h-1zM10 6h1v1h-1zM4 7h3v1h-3zM11 7h1v1h-1zM3 8h1v1h-1zM6 8h1v1h-1zM8 8h1v1h-1zM12 8h1v1h-1zM2 9h1v1h-1zM6 9h1v1h-1zM8 9h1v1h-1zM14 9h1v1h-1zM1 10h1v1h-1zM6 10h1v1h-1zM9 10h1v1h-1zM14 10h1v1h-1zM1 11h1v1h-1zM6 11h1v1h-1zM10 11h1v1h-1zM15 11h1v1h-1zM0 12h8v1h-8zM10 12h6v1h-6z"/><path fill="#fff" d="M2 2h1v1h-1zM3 3h1v1h-1zM4 4h1v1h-1zM5 5h1v1h-1zM6 6h1v1h-1zM7 7h1v1h-1zM9 8h1v1h-1zM9 9h1v1h-1zM10 10h1v1h-1zM11 11h1v1h-1z"/><path fill="#00ffff" d="M3 2h4v1h-4zM10 2h4v1h-4zM4 3h3v1h-3zM10 3h3v1h-3zM5 4h3v1h-3zM9 4h3v1h-3zM6 5h3v1h-3zM10 5h1v1h-1zM7 6h3v1h-3zM8 7h3v1h-3zM4 8h1v1h-1zM10 8h2v1h-2zM3 9h1v1h-1zM10 9h4v1h-4zM2 10h2v1h-2zM11 10h3v1h-3zM2 11h3v1h-3zM12 11h3v1h-3z"/><path fill="#008080" d="M5 8h1v1h-1zM4 9h2v1h-2zM4 10h2v1h-2zM5 11h1v1h-1z"/></svg>
<span class="t" style="left:458.2px;top:582px;font-family:'Liberation Sans',sans-serif;font-size:11px;line-height:13px;color:#000;font-weight:bold;-webkit-text-stroke:0;transform:scaleX(1.093);transform-origin:0 0;">Microsoft Excel - Кни...</span>
<div style="left:715px;top:577px;width:1px;height:20px;background:#808080;"></div>
<div style="left:716px;top:577px;width:1px;height:20px;background:#fff;"></div>
<div style="left:719px;top:576px;width:79px;height:22px;box-shadow:inset -1px -1px #fff,inset 1px 1px #808080;"></div>
<div style="left:722px;top:579px;width:16px;height:16px;background:#000080;"></div>
<span class="t" style="left:723.0px;top:581px;font-family:'Liberation Sans',sans-serif;font-size:11px;line-height:13px;color:#fff;">Ru</span>
<svg class="ic" style="left:739px;top:580px" width="16" height="14" viewBox="0 0 16 14" shape-rendering="crispEdges"><path fill="#000" d="M1 0h15v1h-15zM1 1h2v1h-2zM14 1h2v1h-2zM1 2h1v1h-1zM3 2h2v1h-2zM13 2h3v1h-3zM1 3h1v1h-1zM4 3h2v1h-2zM12 3h2v1h-2zM15 3h1v1h-1zM1 4h1v1h-1zM5 4h2v1h-2zM1 5h1v1h-1zM6 5h2v1h-2zM12 5h1v1h-1zM15 5h1v1h-1zM1 6h1v1h-1zM7 6h1v1h-1zM11 6h1v1h-1zM15 6h1v1h-1zM1 7h1v1h-1zM9 7h2v1h-2zM15 7h1v1h-1zM1 8h1v1h-1zM11 8h1v1h-1zM15 8h1v1h-1zM1 9h1v1h-1zM13 9h1v1h-1zM15 9h1v1h-1zM1 10h1v1h-1zM13 10h3v1h-3zM1 11h1v1h-1zM5 11h11v1h-11z"/><path fill="#c0c0c0" d="M3 1h11v1h-11zM2 2h1v1h-1zM5 2h8v1h-8zM2 3h2v1h-2zM6 3h6v1h-6zM14 3h1v1h-1zM2 4h3v1h-3zM7 4h3v1h-3zM2 5h4v1h-4zM8 5h1v1h-1zM13 5h2v1h-2zM2 6h5v1h-5zM12 6h3v1h-3zM2 7h4v1h-4zM11 7h4v1h-4zM2 8h3v1h-3zM8 8h3v1h-3zM12 8h3v1h-3zM2 9h2v1h-2zM7 9h6v1h-6zM14 9h1v1h-1zM2 10h1v1h-1zM6 10h7v1h-7z"/><path fill="#ff0000" d="M10 4h6v1h-6zM9 5h3v1h-3zM8 6h3v1h-3zM6 7h3v1h-3zM5 8h3v1h-3zM4 9h3v1h-3zM3 10h3v1h-3zM2 11h3v1h-3zM1 12h3v1h-3zM0 13h3v1h-3z"/></svg>
<span class="t" style="left:764.2px;top:582px;font-family:'Liberation Sans',sans-serif;font-size:11px;line-height:13px;color:#000;transform:scaleX(0.930);transform-origin:0 0;">16:41</span>
</div>
<div id="function-wizard" style="left:0;top:0">
<div style="left:198px;top:160px;width:420px;height:336px;background:#c0c0c0;box-shadow:inset -1px -1px #000,inset 1px 1px #c0c0c0,inset -2px -2px #808080,inset 2px 2px #fff;"></div>
<div style="left:201px;top:163px;width:414px;height:18px;background:#000080;"></div>
<span class="t" style="left:204.2px;top:165px;font-family:'Liberation Sans',sans-serif;font-size:12px;line-height:14px;color:#fff;font-weight:bold;-webkit-text-stroke:0;transform:scaleX(1.021);transform-origin:0 0;">Мастер функций - шаг 1 из 2</span>
<div style="left:579px;top:165px;width:16px;height:14px;background:#c0c0c0;box-shadow:inset -1px -1px #000,inset 1px 1px #fff,inset -2px -2px #808080;"></div>
<span class="t" style="left:582.8px;top:166px;font-family:'Liberation Sans',sans-serif;font-size:12px;line-height:14px;color:#000;font-weight:bold;-webkit-text-stroke:0;">?</span>
<div style="left:597px;top:165px;width:16px;height:14px;background:#c0c0c0;box-shadow:inset -1px -1px #000,inset 1px 1px #fff,inset -2px -2px #808080;"></div>
<svg class="ic" style="left:601px;top:168px" width="8" height="7" viewBox="0 0 8 7" ><path d="M0 0h2l2 2 2-2h2l-3 3.5 3 3.5h-2l-2-2-2 2h-2l3-3.5z" fill="#000"/></svg>
<span class="t" style="left:207.2px;top:192px;font-family:'Liberation Sans',sans-serif;font-size:11px;line-height:13px;color:#000;transform:scaleX(1.039);transform-origin:0 0;"><u>К</u>атегория:</span>
<span class="t" style="left:411.2px;top:192px;font-family:'Liberation Sans',sans-serif;font-size:11px;line-height:13px;color:#000;transform:scaleX(1.008);transform-origin:0 0;"><u>Ф</u>ункция:</span>
<div style="left:207px;top:208px;width:198px;height:121px;background:#fff;box-shadow:inset -1px -1px #fff,inset 1px 1px #808080,inset -2px -2px #dfdfdf,inset 2px 2px #000;"></div>
<span class="t" style="left:211.2px;top:211px;font-family:'Liberation Sans',sans-serif;font-size:11px;line-height:13px;color:#000;transform:scaleX(0.997);transform-origin:0 0;">10 недавно использовавшихся</span>
<span class="t" style="left:211.2px;top:224px;font-family:'Liberation Sans',sans-serif;font-size:11px;line-height:13px;color:#000;transform:scaleX(0.988);transform-origin:0 0;">Полный алфавитный перечень</span>
<span class="t" style="left:211.2px;top:237px;font-family:'Liberation Sans',sans-serif;font-size:11px;line-height:13px;color:#000;transform:scaleX(0.972);transform-origin:0 0;">Финансовые</span>
<span class="t" style="left:211.2px;top:250px;font-family:'Liberation Sans',sans-serif;font-size:11px;line-height:13px;color:#000;transform:scaleX(0.991);transform-origin:0 0;">Дата и время</span>
<span class="t" style="left:211.2px;top:263px;font-family:'Liberation Sans',sans-serif;font-size:11px;line-height:13px;color:#000;transform:scaleX(0.992);transform-origin:0 0;">Математические</span>
<div style="left:209px;top:275px;width:178px;height:13px;background:#000080;"></div>
<span class="t" style="left:211.2px;top:276px;font-family:'Liberation Sans',sans-serif;font-size:11px;line-height:13px;color:#fff;transform:scaleX(1.019);transform-origin:0 0;">Статистические</span>
<span class="t" style="left:211.2px;top:289px;font-family:'Liberation Sans',sans-serif;font-size:11px;line-height:13px;color:#000;transform:scaleX(0.963);transform-origin:0 0;">Ссылки и массивы</span>
<span class="t" style="left:211.2px;top:302px;font-family:'Liberation Sans',sans-serif;font-size:11px;line-height:13px;color:#000;transform:scaleX(0.997);transform-origin:0 0;">Работа с базой данных</span>
<span class="t" style="left:211.2px;top:315px;font-family:'Liberation Sans',sans-serif;font-size:11px;line-height:13px;color:#000;transform:scaleX(1.027);transform-origin:0 0;">Текстовые</span>
<div style="left:387px;top:210px;width:16px;height:117px;background:repeating-conic-gradient(#fff 0% 25%,#c0c0c0 0% 50%) 0 0/2px 2px;"></div>
<div style="left:387px;top:210px;width:16px;height:16px;background:#c0c0c0;box-shadow:inset -1px -1px #000,inset 1px 1px #dfdfdf,inset -2px -2px #808080,inset 2px 2px #fff;"></div>
<div style="left:394px;top:216px;width:1px;height:1px;background:#000;"></div>
<div style="left:393px;top:217px;width:3px;height:1px;background:#000;"></div>
<div style="left:392px;top:218px;width:5px;height:1px;background:#000;"></div>
<div style="left:391px;top:219px;width:7px;height:1px;background:#000;"></div>
<div style="left:387px;top:311px;width:16px;height:16px;background:#c0c0c0;box-shadow:inset -1px -1px #000,inset 1px 1px #dfdfdf,inset -2px -2px #808080,inset 2px 2px #fff;"></div>
<div style="left:391px;top:317px;width:7px;height:1px;background:#000;"></div>
<div style="left:392px;top:318px;width:5px;height:1px;background:#000;"></div>
<div style="left:393px;top:319px;width:3px;height:1px;background:#000;"></div>
<div style="left:394px;top:320px;width:1px;height:1px;background:#000;"></div>
<div style="left:387px;top:226px;width:16px;height:49px;background:#c0c0c0;box-shadow:inset -1px -1px #000,inset 1px 1px #dfdfdf,inset -2px -2px #808080,inset 2px 2px #fff;"></div>
<div style="left:411px;top:208px;width:198px;height:121px;background:#fff;box-shadow:inset -1px -1px #fff,inset 1px 1px #808080,inset -2px -2px #dfdfdf,inset 2px 2px #000;"></div>
<span class="t" style="left:415.2px;top:211px;font-family:'Liberation Sans',sans-serif;font-size:11px;line-height:13px;color:#000;transform:scaleX(0.888);transform-origin:0 0;">РОСТ</span>
<span class="t" style="left:415.2px;top:224px;font-family:'Liberation Sans',sans-serif;font-size:11px;line-height:13px;color:#000;transform:scaleX(0.924);transform-origin:0 0;">СКОС</span>
<span class="t" style="left:415.2px;top:237px;font-family:'Liberation Sans',sans-serif;font-size:11px;line-height:13px;color:#000;transform:scaleX(0.907);transform-origin:0 0;">СРГАРМ</span>
<span class="t" style="left:415.2px;top:250px;font-family:'Liberation Sans',sans-serif;font-size:11px;line-height:13px;color:#000;transform:scaleX(0.886);transform-origin:0 0;">СРГЕОМ</span>
<span class="t" style="left:415.2px;top:263px;font-family:'Liberation Sans',sans-serif;font-size:11px;line-height:13px;color:#000;transform:scaleX(0.923);transform-origin:0 0;">СРЗНАЧ</span>
<span class="t" style="left:415.2px;top:276px;font-family:'Liberation Sans',sans-serif;font-size:11px;line-height:13px;color:#000;transform:scaleX(0.914);transform-origin:0 0;">СРЗНАЧА</span>
<div style="left:413px;top:288px;width:178px;height:13px;background:#000080;"></div>
<div style="left:413px;top:288px;width:178px;height:13px;box-sizing:border-box;border:1px dotted #ffff80;"></div>
<span class="t" style="left:415.2px;top:289px;font-family:'Liberation Sans',sans-serif;font-size:11px;line-height:13px;color:#fff;transform:scaleX(0.933);transform-origin:0 0;">СРОТКЛ</span>
<span class="t" style="left:415.2px;top:302px;font-family:'Liberation Sans',sans-serif;font-size:11px;line-height:13px;color:#000;transform:scaleX(0.952);transform-origin:0 0;">СТАНДОТКЛОН</span>
<span class="t" style="left:415.2px;top:315px;font-family:'Liberation Sans',sans-serif;font-size:11px;line-height:13px;color:#000;transform:scaleX(0.946);transform-origin:0 0;">СТАНДОТКЛОНА</span>
<div style="left:591px;top:210px;width:16px;height:117px;background:repeating-conic-gradient(#fff 0% 25%,#c0c0c0 0% 50%) 0 0/2px 2px;"></div>
<div style="left:591px;top:210px;width:16px;height:16px;background:#c0c0c0;box-shadow:inset -1px -1px #000,inset 1px 1px #dfdfdf,inset -2px -2px #808080,inset 2px 2px #fff;"></div>
<div style="left:598px;top:216px;width:1px;height:1px;background:#000;"></div>
<div style="left:597px;top:217px;width:3px;height:1px;background:#000;"></div>
<div style="left:596px;top:218px;width:5px;height:1px;background:#000;"></div>
<div style="left:595px;top:219px;width:7px;height:1px;background:#000;"></div>
<div style="left:591px;top:311px;width:16px;height:16px;background:#c0c0c0;box-shadow:inset -1px -1px #000,inset 1px 1px #dfdfdf,inset -2px -2px #808080,inset 2px 2px #fff;"></div>
<div style="left:595px;top:317px;width:7px;height:1px;background:#000;"></div>
<div style="left:596px;top:318px;width:5px;height:1px;background:#000;"></div>
<div style="left:597px;top:319px;width:3px;height:1px;background:#000;"></div>
<div style="left:598px;top:320px;width:1px;height:1px;background:#000;"></div>
<div style="left:591px;top:279px;width:16px;height:9px;background:#c0c0c0;box-shadow:inset -1px -1px #000,inset 1px 1px #dfdfdf,inset -2px -2px #808080,inset 2px 2px #fff;"></div>
<span class="t" style="left:207.2px;top:359px;font-family:'Liberation Sans',sans-serif;font-size:11px;line-height:13px;color:#000;font-weight:bold;-webkit-text-stroke:0;transform:scaleX(1.014);transform-origin:0 0;">СРОТКЛ(число1;число2;...)</span>
<span class="t" style="left:207.2px;top:398px;font-family:'Liberation Sans',sans-serif;font-size:11px;line-height:13px;color:#000;transform:scaleX(1.019);transform-origin:0 0;">Возвращает среднее абсолютных значений отклонений точек данных от</span>
<span class="t" style="left:207.2px;top:411px;font-family:'Liberation Sans',sans-serif;font-size:11px;line-height:13px;color:#000;transform:scaleX(0.993);transform-origin:0 0;">среднего. Аргументами могут являться числа, имена, массивы или ссылки на</span>
<span class="t" style="left:207.2px;top:424px;font-family:'Liberation Sans',sans-serif;font-size:11px;line-height:13px;color:#000;transform:scaleX(0.961);transform-origin:0 0;">ячейки с числами.</span>
<div style="left:207px;top:462px;width:24px;height:23px;background:#c0c0c0;box-shadow:inset -1px -1px #000,inset 1px 1px #fff,inset -2px -2px #808080,inset 2px 2px #dfdfdf;"></div>
<svg class="ic" style="left:211px;top:465px" width="16" height="15" viewBox="0 0 16 15" shape-rendering="crispEdges"><path fill="#000" d="M1 0h12v1h-12zM0 1h1v1h-1zM13 1h1v1h-1zM0 2h1v1h-1zM13 2h2v1h-2zM0 3h1v1h-1zM13 3h2v1h-2zM0 4h1v1h-1zM13 4h2v1h-2zM0 5h1v1h-1zM13 5h2v1h-2zM0 6h1v1h-1zM13 6h2v1h-2zM0 7h1v1h-1zM13 7h2v1h-2zM0 8h1v1h-1zM13 8h2v1h-2zM0 9h1v1h-1zM13 9h2v1h-2zM0 10h1v1h-1zM13 10h2v1h-2zM1 11h8v1h-8zM11 11h4v1h-4zM2 12h8v1h-8zM11 12h3v1h-3zM10 13h3v1h-3zM11 14h2v1h-2z"/><path fill="#ffff70" d="M1 1h1v1h-1zM3 1h1v1h-1zM5 1h1v1h-1zM7 1h1v1h-1zM9 1h1v1h-1zM11 1h1v1h-1zM2 2h1v1h-1zM10 2h1v1h-1zM12 2h1v1h-1zM1 3h1v1h-1zM6 3h1v1h-1zM11 3h1v1h-1zM2 4h1v1h-1zM4 4h1v1h-1zM6 4h1v1h-1zM10 4h1v1h-1zM12 4h1v1h-1zM1 5h1v1h-1zM3 5h1v1h-1zM5 5h1v1h-1zM10 5h1v1h-1zM12 5h1v1h-1zM2 6h1v1h-1zM4 6h1v1h-1zM9 6h1v1h-1zM11 6h1v1h-1zM1 7h1v1h-1zM3 7h1v1h-1zM5 7h1v1h-1zM8 7h1v1h-1zM10 7h1v1h-1zM12 7h1v1h-1zM2 8h1v1h-1zM4 8h1v1h-1zM6 8h1v1h-1zM8 8h1v1h-1zM10 8h1v1h-1zM12 8h1v1h-1zM1 9h1v1h-1zM3 9h1v1h-1zM5 9h1v1h-1zM8 9h1v1h-1zM10 9h1v1h-1zM12 9h1v1h-1zM2 10h1v1h-1zM4 10h1v1h-1zM6 10h1v1h-1zM8 10h1v1h-1zM10 10h1v1h-1zM12 10h1v1h-1zM10 11h1v1h-1zM10 12h1v1h-1z"/><path fill="#fff" d="M2 1h1v1h-1zM4 1h1v1h-1zM6 1h1v1h-1zM8 1h1v1h-1zM10 1h1v1h-1zM12 1h1v1h-1zM1 2h1v1h-1zM3 2h1v1h-1zM9 2h1v1h-1zM11 2h1v1h-1zM2 3h1v1h-1zM5 3h1v1h-1zM7 3h1v1h-1zM10 3h1v1h-1zM12 3h1v1h-1zM1 4h1v1h-1zM3 4h1v1h-1zM5 4h1v1h-1zM7 4h1v1h-1zM11 4h1v1h-1zM2 5h1v1h-1zM4 5h1v1h-1zM6 5h1v1h-1zM9 5h1v1h-1zM11 5h1v1h-1zM1 6h1v1h-1zM3 6h1v1h-1zM5 6h1v1h-1zM8 6h1v1h-1zM10 6h1v1h-1zM12 6h1v1h-1zM2 7h1v1h-1zM4 7h1v1h-1zM9 7h1v1h-1zM11 7h1v1h-1zM1 8h1v1h-1zM3 8h1v1h-1zM5 8h1v1h-1zM7 8h1v1h-1zM9 8h1v1h-1zM11 8h1v1h-1zM2 9h1v1h-1zM4 9h1v1h-1zM9 9h1v1h-1zM11 9h1v1h-1zM1 10h1v1h-1zM3 10h1v1h-1zM5 10h1v1h-1zM7 10h1v1h-1zM9 10h1v1h-1zM11 10h1v1h-1zM9 11h1v1h-1z"/><path fill="#000080" d="M4 2h5v1h-5zM3 3h2v1h-2zM8 3h2v1h-2zM8 4h2v1h-2zM7 5h2v1h-2zM6 6h2v1h-2zM6 7h2v1h-2zM6 9h2v1h-2z"/></svg>
<div style="left:454px;top:463px;width:74px;height:22px;background:#000;"></div>
<div style="left:455px;top:464px;width:72px;height:20px;background:#c0c0c0;box-shadow:inset -1px -1px #000,inset 1px 1px #fff,inset -2px -2px #808080,inset 2px 2px #dfdfdf;"></div>
<span class="t" style="left:481.9px;top:468px;font-family:'Liberation Sans',sans-serif;font-size:11px;line-height:13px;color:#000;transform:scaleX(1.012);transform-origin:0 0;">OK</span>
<div style="left:535px;top:463px;width:74px;height:22px;background:#c0c0c0;box-shadow:inset -1px -1px #000,inset 1px 1px #fff,inset -2px -2px #808080,inset 2px 2px #dfdfdf;"></div>
<span class="t" style="left:552.0px;top:468px;font-family:'Liberation Sans',sans-serif;font-size:11px;line-height:13px;color:#000;transform:scaleX(0.965);transform-origin:0 0;">Отмена</span>
</div>
</body></html>
